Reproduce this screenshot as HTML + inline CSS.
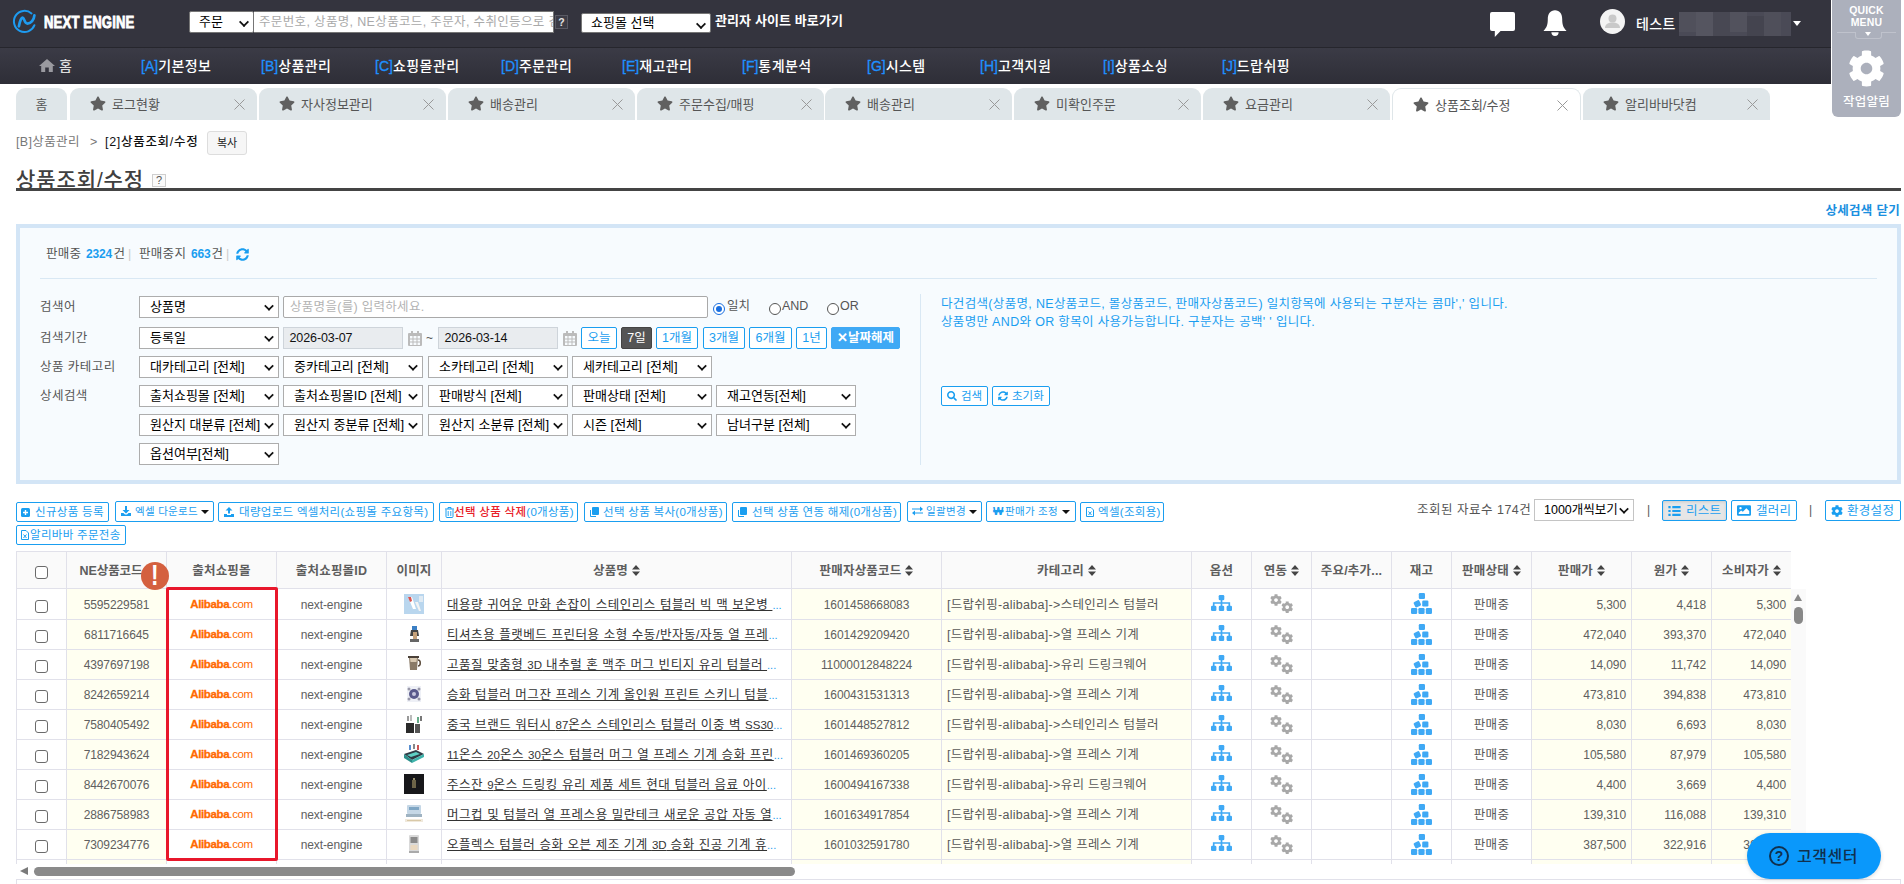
<!DOCTYPE html>
<html lang="ko">
<head>
<meta charset="utf-8">
<title>상품조회/수정</title>
<style>
*{box-sizing:border-box;margin:0;padding:0}
html,body{width:1904px;height:884px;overflow:hidden;background:#fff}
body{font-family:"Liberation Sans","Noto Sans CJK KR","NanumGothic",sans-serif;font-size:12px;color:#333;position:relative}
.abs{position:absolute}
svg{display:block}
/* ---------- top bar ---------- */
#top{position:absolute;left:0;top:0;width:1831px;height:48px;background:#34343e;border-bottom:1px solid #26262d}
#nav{position:absolute;left:0;top:48px;width:1831px;height:36px;background:linear-gradient(#3b3b46,#2e2e37)}
.logo-txt{position:absolute;left:44px;top:11.500px;font-size:17px;line-height:22px;font-weight:bold;color:#fff;transform:scaleX(.77);transform-origin:0 50%;letter-spacing:.2px;white-space:nowrap;-webkit-text-stroke:.9px #fff}
.sel{position:absolute;background:#fff;border:1px solid #767676;border-radius:2px;height:22px;line-height:20px;font-size:13px;color:#000;padding-left:9px;white-space:nowrap;overflow:hidden}
.sel:after{content:"";position:absolute;right:5px;top:5.500px;width:6px;height:6px;border-right:2.200px solid #111;border-bottom:2.200px solid #111;transform:rotate(45deg) scale(.88)}
.inp{position:absolute;background:#fff;border:1px solid #767676;height:22px;line-height:20px;font-size:12.500px;letter-spacing:.35px;color:#a9a9a9;padding-left:5px;white-space:nowrap;overflow:hidden}
.navi{position:absolute;top:0;height:36px;line-height:36px;font-size:14px;color:#fff;font-weight:500;white-space:nowrap;letter-spacing:.45px}
.navi b{font-weight:400;color:#1e90ff;font-size:14px;letter-spacing:0;-webkit-text-stroke:.3px #1e90ff}
/* ---------- tabs ---------- */
.tab{position:absolute;top:88px;height:32px;background:#dfe6e9;border-radius:9px 9px 0 0;color:#555;font-size:13px;line-height:33px;white-space:nowrap}
.tab .st{position:absolute;left:20px;top:8px}
.tab .tx{position:absolute;left:42px;top:0}
.tab .x{position:absolute;right:12px;top:11px}
.tab.on{background:#fff;border:1px solid #dfe6e9;border-bottom:none}
</style>
</head>
<body>
<div id="top">
  <svg class="abs" style="left:12px;top:9px" width="26" height="26" viewBox="0 0 26 26"><path d="M19.500 4.400A10.600 10.600 0 1 0 22.450 16.200" fill="none" stroke="#1e9bf0" stroke-width="2" stroke-linecap="round"/><path d="M6.900 17.300C8 11.500 9.500 8.300 10.800 8.700C12.600 9.300 12.300 14.600 15.500 14.600C19 14.600 22 11 22.400 6.400" fill="none" stroke="#1e9bf0" stroke-width="2.700" stroke-linecap="round" stroke-linejoin="round"/></svg>
  <div class="logo-txt">NEXT ENGINE</div>
  <div class="sel" style="left:189px;top:11px;width:65px;">주문</div>
  <div class="inp" style="left:254px;top:11px;width:300px;border-left:none">주문번호, 상품명, NE상품코드, 주문자, 수취인등으로 검</div>
  <div class="abs" style="left:555px;top:15px;width:13px;height:14px;background:#3c3c46;border:1px solid #5a5a64;color:#e4e4e4;font-size:10.500px;line-height:12px;text-align:center;font-weight:bold">?</div>
  <div class="sel" style="left:581px;top:13px;width:130px;height:20px;line-height:18px">쇼핑몰 선택</div>
  <div class="abs" style="left:715px;top:12px;font-size:13px;letter-spacing:.1px;line-height:18px;font-weight:bold;color:#fff;white-space:nowrap">관리자 사이트 바로가기</div>
  <!-- chat -->
  <svg class="abs" style="left:1490px;top:12px" width="25" height="26" viewBox="0 0 26 26" preserveAspectRatio="none"><path d="M2 0h22a2 2 0 0 1 2 2v15a2 2 0 0 1-2 2H11l-6 6v-6H2a2 2 0 0 1-2-2V2a2 2 0 0 1 2-2z" fill="#fff"/></svg>
  <!-- bell -->
  <svg class="abs" style="left:1543px;top:10px" width="24" height="26" viewBox="0 0 24 26"><path d="M12 .3C7.300 .3 4.800 4 4.800 9c0 6-1.300 8.800-4 11.400-.3.300-.1.700.3.700h21.800c.4 0 .6-.4.300-.7-2.700-2.600-4-5.400-4-11.400 0-5-2.500-8.700-7.200-8.700z" fill="#fff"/><path d="M8.400 22.300h7.200a3.600 3.600 0 0 1-7.200 0z" fill="#fff"/></svg>
  <!-- avatar -->
  <svg class="abs" style="left:1600px;top:9px" width="25" height="25" viewBox="0 0 25 25"><circle cx="12.500" cy="12.500" r="12.500" fill="#f4f4f4"/><circle cx="12.500" cy="9.500" r="4" fill="#c9c9c9"/><path d="M5 19c0-4 3.500-5.500 7.500-5.500S20 15 20 19z" fill="#c9c9c9"/></svg>
  <div class="abs" style="left:1636px;top:13.500px;font-size:14px;line-height:20px;color:#fff;font-weight:500;letter-spacing:.4px">테스트</div>
  <div class="abs" style="left:1679px;top:12px;width:112px;height:24px;background:#4a4a56"><i class="abs" style="left:0;top:0;width:17px;height:20px;background:#50505b"></i><i class="abs" style="left:17px;top:0;width:17px;height:24px;background:#555560"></i><i class="abs" style="left:34px;top:0;width:17px;height:24px;background:#484853"></i><i class="abs" style="left:51px;top:0;width:17px;height:20px;background:#52525d"></i><i class="abs" style="left:68px;top:4px;width:17px;height:20px;background:#44444f"></i><i class="abs" style="left:85px;top:0;width:17px;height:24px;background:#4f4f5a"></i></div>
  <div class="abs" style="left:1793px;top:21px;width:0;height:0;border:4px solid transparent;border-top:5px solid #fff"></div>
</div>
<div id="nav">
  <svg class="abs" style="left:39px;top:11px" width="16" height="13" viewBox="0 0 16 13"><path d="M8 0l8 7h-2.200v6H9.800V8.500H6.200V13H2.200V7H0z" fill="#9a9aa0"/></svg>
  <div class="navi" style="left:59px;color:#ddd">홈</div>
  <div class="navi" style="left:141px"><b>[A]</b>기본정보</div>
  <div class="navi" style="left:261px"><b>[B]</b>상품관리</div>
  <div class="navi" style="left:375px"><b>[C]</b>쇼핑몰관리</div>
  <div class="navi" style="left:501px"><b>[D]</b>주문관리</div>
  <div class="navi" style="left:622px"><b>[E]</b>재고관리</div>
  <div class="navi" style="left:742px"><b>[F]</b>통계분석</div>
  <div class="navi" style="left:867px"><b>[G]</b>시스템</div>
  <div class="navi" style="left:980px"><b>[H]</b>고객지원</div>
  <div class="navi" style="left:1103px"><b>[I]</b>상품소싱</div>
  <div class="navi" style="left:1222px"><b>[J]</b>드랍쉬핑</div>
</div>
<!-- quick menu -->
<div class="abs" id="quick" style="left:1832px;top:0;width:69px;height:117px;background:#acb0bc;border-radius:0 0 6px 6px;color:#fff;text-align:center">
  <div style="font-size:11px;line-height:12px;padding-top:4px;font-weight:bold;letter-spacing:.2px;transform:scaleX(.95)">QUICK<br>MENU</div>
  <div class="abs" style="left:5px;top:32px;width:59px;height:1px;background:#bfc2cc"></div><div class="abs" style="left:23px;top:32px;width:27px;height:7px;border:1px solid #bfc2cc;border-top:none;border-radius:0 0 3px 3px;background:#acb0bc"></div>
  <div class="abs" style="left:33px;top:32px;border:3.500px solid transparent;border-top:4px solid #fff"></div>
  <svg class="abs" style="left:16px;top:50px" width="37" height="37" viewBox="0 0 512 512"><path fill="#fff" d="M487.400 315.700l-42.600-24.600c4.300-23.200 4.300-47 0-70.200l42.600-24.600c4.900-2.800 7.100-8.600 5.500-14-11.100-35.600-30-67.800-54.700-94.600-3.800-4.100-10-5.100-14.800-2.300L380.800 110c-17.900-15.400-38.500-27.300-60.800-35.100V25.800c0-5.600-3.900-10.500-9.400-11.700-36.700-8.200-74.300-7.800-109.200 0-5.500 1.200-9.400 6.100-9.400 11.700V75c-22.200 7.900-42.800 19.800-60.800 35.100L88.700 85.500c-4.900-2.800-11-1.900-14.800 2.300-24.700 26.700-43.600 58.900-54.700 94.600-1.700 5.400.6 11.200 5.500 14L67.300 221c-4.300 23.200-4.300 47 0 70.200l-42.600 24.600c-4.900 2.800-7.100 8.600-5.500 14 11.100 35.600 30 67.800 54.700 94.600 3.800 4.100 10 5.100 14.800 2.300l42.600-24.600c17.900 15.400 38.500 27.300 60.800 35.100v49.200c0 5.600 3.900 10.500 9.400 11.700 36.700 8.200 74.300 7.800 109.200 0 5.500-1.200 9.400-6.100 9.400-11.700v-49.200c22.200-7.900 42.800-19.800 60.800-35.100l42.600 24.600c4.900 2.800 11 1.900 14.800-2.300 24.700-26.700 43.600-58.900 54.700-94.600 1.500-5.500-.7-11.300-5.600-14.100zM256 336c-44.100 0-80-35.900-80-80s35.900-80 80-80 80 35.900 80 80-35.900 80-80 80z"/></svg>
  <div class="abs" style="left:0;top:94px;width:69px;font-size:12.500px;letter-spacing:.3px;line-height:16px;font-weight:500">작업알림</div>
</div>
<div class="tab" style="left:16px;width:51px;text-align:center">홈</div>
<div class="tab" style="left:70px;width:187px"><svg class="st" width="16" height="15" viewBox="0 0 576 512"><path fill="#606060" d="M259.300 17.800L194 150.200 47.900 171.500c-26.200 3.800-36.700 36.100-17.700 54.600l105.700 103-25 145.500c-4.500 26.300 23.200 46 46.400 33.700L288 439.600l130.700 68.700c23.200 12.200 50.900-7.400 46.400-33.700l-25-145.500 105.700-103c19-18.500 8.500-50.800-17.700-54.600L382 150.200 316.700 17.800c-11.700-23.600-45.600-23.900-57.400 0z"/></svg><span class="tx">로그현황</span><svg class="x" width="11" height="11" viewBox="0 0 11 11"><path d="M.5.5l10 10M10.500.5l-10 10" stroke="#999" stroke-width="1" fill="none"/></svg></div>
<div class="tab" style="left:259px;width:187px"><svg class="st" width="16" height="15" viewBox="0 0 576 512"><path fill="#606060" d="M259.300 17.800L194 150.200 47.900 171.500c-26.200 3.800-36.700 36.100-17.700 54.600l105.700 103-25 145.500c-4.500 26.300 23.200 46 46.400 33.700L288 439.600l130.700 68.700c23.200 12.200 50.900-7.400 46.400-33.700l-25-145.500 105.700-103c19-18.500 8.500-50.800-17.700-54.600L382 150.200 316.700 17.800c-11.700-23.600-45.600-23.900-57.400 0z"/></svg><span class="tx">자사정보관리</span><svg class="x" width="11" height="11" viewBox="0 0 11 11"><path d="M.5.5l10 10M10.500.5l-10 10" stroke="#999" stroke-width="1" fill="none"/></svg></div>
<div class="tab" style="left:448px;width:187px"><svg class="st" width="16" height="15" viewBox="0 0 576 512"><path fill="#606060" d="M259.300 17.800L194 150.200 47.900 171.500c-26.200 3.800-36.700 36.100-17.700 54.600l105.700 103-25 145.500c-4.500 26.300 23.200 46 46.400 33.700L288 439.600l130.700 68.700c23.200 12.200 50.900-7.400 46.400-33.700l-25-145.500 105.700-103c19-18.500 8.500-50.800-17.700-54.600L382 150.200 316.700 17.800c-11.700-23.600-45.600-23.900-57.400 0z"/></svg><span class="tx">배송관리</span><svg class="x" width="11" height="11" viewBox="0 0 11 11"><path d="M.5.5l10 10M10.500.5l-10 10" stroke="#999" stroke-width="1" fill="none"/></svg></div>
<div class="tab" style="left:637px;width:187px"><svg class="st" width="16" height="15" viewBox="0 0 576 512"><path fill="#606060" d="M259.300 17.800L194 150.200 47.900 171.500c-26.200 3.800-36.700 36.100-17.700 54.600l105.700 103-25 145.500c-4.500 26.300 23.200 46 46.400 33.700L288 439.600l130.700 68.700c23.200 12.200 50.900-7.400 46.400-33.700l-25-145.500 105.700-103c19-18.500 8.500-50.800-17.700-54.600L382 150.200 316.700 17.800c-11.700-23.600-45.600-23.900-57.400 0z"/></svg><span class="tx">주문수집/매핑</span><svg class="x" width="11" height="11" viewBox="0 0 11 11"><path d="M.5.5l10 10M10.500.5l-10 10" stroke="#999" stroke-width="1" fill="none"/></svg></div>
<div class="tab" style="left:825px;width:187px"><svg class="st" width="16" height="15" viewBox="0 0 576 512"><path fill="#606060" d="M259.300 17.800L194 150.200 47.900 171.500c-26.200 3.800-36.700 36.100-17.700 54.600l105.700 103-25 145.500c-4.500 26.300 23.200 46 46.400 33.700L288 439.600l130.700 68.700c23.200 12.200 50.900-7.400 46.400-33.700l-25-145.500 105.700-103c19-18.500 8.500-50.800-17.700-54.600L382 150.200 316.700 17.800c-11.700-23.600-45.600-23.900-57.400 0z"/></svg><span class="tx">배송관리</span><svg class="x" width="11" height="11" viewBox="0 0 11 11"><path d="M.5.5l10 10M10.500.5l-10 10" stroke="#999" stroke-width="1" fill="none"/></svg></div>
<div class="tab" style="left:1014px;width:187px"><svg class="st" width="16" height="15" viewBox="0 0 576 512"><path fill="#606060" d="M259.300 17.800L194 150.200 47.900 171.500c-26.200 3.800-36.700 36.100-17.700 54.600l105.700 103-25 145.500c-4.500 26.300 23.200 46 46.400 33.700L288 439.600l130.700 68.700c23.200 12.200 50.900-7.400 46.400-33.700l-25-145.500 105.700-103c19-18.500 8.500-50.800-17.700-54.600L382 150.200 316.700 17.800c-11.700-23.600-45.600-23.900-57.400 0z"/></svg><span class="tx">미확인주문</span><svg class="x" width="11" height="11" viewBox="0 0 11 11"><path d="M.5.5l10 10M10.500.5l-10 10" stroke="#999" stroke-width="1" fill="none"/></svg></div>
<div class="tab" style="left:1203px;width:187px"><svg class="st" width="16" height="15" viewBox="0 0 576 512"><path fill="#606060" d="M259.300 17.800L194 150.200 47.900 171.500c-26.200 3.800-36.700 36.100-17.700 54.600l105.700 103-25 145.500c-4.500 26.300 23.200 46 46.400 33.700L288 439.600l130.700 68.700c23.200 12.200 50.900-7.400 46.400-33.700l-25-145.500 105.700-103c19-18.500 8.500-50.800-17.700-54.600L382 150.200 316.700 17.800c-11.700-23.600-45.600-23.900-57.400 0z"/></svg><span class="tx">요금관리</span><svg class="x" width="11" height="11" viewBox="0 0 11 11"><path d="M.5.5l10 10M10.500.5l-10 10" stroke="#999" stroke-width="1" fill="none"/></svg></div>
<div class="tab on" style="left:1392px;width:189px"><svg class="st" width="16" height="15" viewBox="0 0 576 512"><path fill="#606060" d="M259.300 17.800L194 150.200 47.900 171.500c-26.200 3.800-36.700 36.100-17.700 54.600l105.700 103-25 145.500c-4.500 26.300 23.200 46 46.400 33.700L288 439.600l130.700 68.700c23.200 12.200 50.900-7.400 46.400-33.700l-25-145.500 105.700-103c19-18.500 8.500-50.800-17.700-54.600L382 150.200 316.700 17.800c-11.700-23.600-45.600-23.900-57.400 0z"/></svg><span class="tx">상품조회/수정</span><svg class="x" width="11" height="11" viewBox="0 0 11 11"><path d="M.5.5l10 10M10.500.5l-10 10" stroke="#999" stroke-width="1" fill="none"/></svg></div>
<div class="tab" style="left:1583px;width:187px"><svg class="st" width="16" height="15" viewBox="0 0 576 512"><path fill="#606060" d="M259.300 17.800L194 150.200 47.900 171.500c-26.200 3.800-36.700 36.100-17.700 54.600l105.700 103-25 145.500c-4.500 26.300 23.200 46 46.400 33.700L288 439.600l130.700 68.700c23.200 12.200 50.900-7.400 46.400-33.700l-25-145.500 105.700-103c19-18.500 8.500-50.800-17.700-54.600L382 150.200 316.700 17.800c-11.700-23.600-45.600-23.900-57.400 0z"/></svg><span class="tx">알리바바닷컴</span><svg class="x" width="11" height="11" viewBox="0 0 11 11"><path d="M.5.5l10 10M10.500.5l-10 10" stroke="#999" stroke-width="1" fill="none"/></svg></div>
<style>
.bc{position:absolute;top:132.500px;font-size:12.500px;letter-spacing:.35px;line-height:18px;white-space:nowrap}
.cn{top:245px;font-size:12.500px;letter-spacing:.3px;line-height:18px;color:#555;white-space:nowrap}
.lbl{position:absolute;left:40px;font-size:12.500px;letter-spacing:.45px;color:#555;line-height:22px;white-space:nowrap}
.s2{position:absolute;width:140px;height:22px;background:#fff;border:1px solid #adadad;border-radius:0;font-size:13px;line-height:20px;color:#000;padding-left:10px;white-space:nowrap;overflow:hidden}
.s2:after{content:"";position:absolute;right:5px;top:5px;width:6px;height:6px;border-right:2.200px solid #111;border-bottom:2.200px solid #111;transform:rotate(45deg) scale(.85)}
.dt{position:absolute;top:327px;width:120px;height:22px;background:#e9ecef;border:1px solid #ced4da;font-size:12.500px;letter-spacing:-.1px;line-height:21px;color:#111;padding-left:5.500px}
.pb{position:absolute;top:327px;height:22px;border:1px solid #1a9ef0;border-radius:2px;background:#fff;color:#1a9ef0;font-size:12.500px;line-height:20px;text-align:center;white-space:nowrap}
.rd{position:absolute;top:303px;width:12px;height:12px;border:1px solid #555;border-radius:50%;background:#fff}
.rt{position:absolute;top:297px;font-size:12.500px;line-height:18px;color:#555;white-space:nowrap}
.cal{position:absolute;top:331px}
</style>
<div class="bc" style="left:16px;color:#777">[B]상품관리</div>
<div class="bc" style="left:90px;color:#777">&gt;</div>
<div class="bc" style="left:105px;color:#111;font-weight:500;letter-spacing:.7px">[2]상품조회/수정</div>
<div class="abs" style="left:207px;top:131px;width:40px;height:24px;border:1px solid #ddd;border-radius:3px;background:#f6f6f6;font-size:11px;line-height:22px;text-align:center;color:#222">복사</div>
<div class="abs" style="left:16px;top:162px;font-size:21px;letter-spacing:.9px;line-height:36px;color:#404040;font-weight:500;white-space:nowrap">상품조회/수정</div>
<div class="abs" style="left:152px;top:174px;width:14px;height:13px;border:1px solid #cfcfcf;background:#fafafa;font-size:11px;line-height:11px;text-align:center;color:#555;font-weight:normal">?</div>
<div class="abs" style="left:16px;top:188px;width:1885px;height:3px;background:#444"></div>
<div class="abs" style="left:1700px;top:202px;width:1200px;text-align:right;font-size:12.500px;letter-spacing:.3px;line-height:18px;color:#1a8fe0;font-weight:bold;white-space:nowrap;width:200px">상세검색 닫기</div>
<!-- search panel -->
<div class="abs" style="left:16px;top:224px;width:1885px;height:260px;border:4px solid #d3e5f6;background:#f7fbfe"></div>
<div class="abs cn" style="left:46px">판매중</div><div class="abs cn" style="left:86px;color:#1a9ef0;font-weight:bold;letter-spacing:-.2px;font-size:12px">2324</div><div class="abs cn" style="left:113.500px">건</div><div class="abs cn" style="left:128px;color:#ccc">|</div>
<div class="abs cn" style="left:139px">판매중지</div><div class="abs cn" style="left:191px;color:#1a9ef0;font-weight:bold;letter-spacing:-.2px;font-size:12px">663</div><div class="abs cn" style="left:211.500px">건</div><div class="abs cn" style="left:226px;color:#ccc">|</div>
<svg class="abs" style="left:236px;top:248px" width="13" height="13" viewBox="0 0 512 512"><path fill="#1a9ef0" d="M370.700 133.300C339.500 104 298.900 88 255.800 88c-77.500.1-144.300 53.200-162.800 126.900-1.300 5.400-6.100 9.200-11.700 9.200H24.100c-7.500 0-13.200-6.800-11.800-14.200C33.900 94.900 134.800 8 256 8c66.400 0 126.800 26.100 171.300 68.700L463 41c15.100-15.100 41-4.400 41 17v134c0 13.300-10.700 24-24 24H346c-21.400 0-32.100-25.900-17-41l41.700-41.700zM32 296h134c21.400 0 32.100 25.900 17 41l-41.800 41.700c31.300 29.300 71.800 45.300 114.900 45.300 77.400-.1 144.300-53.100 162.800-126.800 1.300-5.400 6.100-9.200 11.700-9.200h57.300c7.500 0 13.200 6.800 11.800 14.200C478.100 417.100 377.200 504 256 504c-66.400 0-126.800-26.100-171.300-68.700L49 471c-15.100 15.100-41 4.400-41-17V320c0-13.300 10.700-24 24-24z"/></svg>
<div class="abs" style="left:40px;top:278px;width:1837px;height:1px;background:#d9e8f4"></div>
<!-- row 1 -->
<div class="lbl" style="top:296px">검색어</div>
<div class="s2" style="left:139px;top:296px">상품명</div>
<div class="abs" style="left:283px;top:296px;width:425px;height:22px;border:1px solid #a9a9a9;border-radius:2px;background:#fff;font-size:12.500px;letter-spacing:.3px;line-height:20px;color:#b3b3b3;padding-left:6px">상품명을(를) 입력하세요.</div>
<div class="rd" style="left:713px;border-color:#1a6fe0"><div style="margin:2px;width:6px;height:6px;border-radius:50%;background:#1a6fe0"></div></div>
<div class="rt" style="left:727px">일치</div>
<div class="rd" style="left:769px"></div><div class="rt" style="left:782px">AND</div>
<div class="rd" style="left:827px"></div><div class="rt" style="left:840px">OR</div>
<!-- row 2 -->
<div class="lbl" style="top:327px">검색기간</div>
<div class="s2" style="left:139px;top:327px">등록일</div>
<div class="dt" style="left:283px">2026-03-07</div>
<svg class="cal" style="left:408px" width="14" height="15" viewBox="0 0 14 15"><path fill="#bbb" d="M1 2h12a1 1 0 0 1 1 1v11a1 1 0 0 1-1 1H1a1 1 0 0 1-1-1V3a1 1 0 0 1 1-1zm1 3v9h10V5zM3 0h2v3H3zm6 0h2v3H9z"/><path d="M5 5v9M9 5v9M2 8h10M2 11h10" stroke="#bbb" stroke-width="1"/></svg>
<div class="abs" style="left:426px;top:329px;font-size:12px;line-height:18px;color:#555">~</div>
<div class="dt" style="left:438px">2026-03-14</div>
<svg class="cal" style="left:563px" width="14" height="15" viewBox="0 0 14 15"><path fill="#bbb" d="M1 2h12a1 1 0 0 1 1 1v11a1 1 0 0 1-1 1H1a1 1 0 0 1-1-1V3a1 1 0 0 1 1-1zm1 3v9h10V5zM3 0h2v3H3zm6 0h2v3H9z"/><path d="M5 5v9M9 5v9M2 8h10M2 11h10" stroke="#bbb" stroke-width="1"/></svg>
<div class="pb" style="left:581px;width:36px">오늘</div>
<div class="pb" style="left:621px;width:31px;background:#555;border-color:#444;color:#fff">7일</div>
<div class="pb" style="left:656px;width:42px">1개월</div>
<div class="pb" style="left:703px;width:42px">3개월</div>
<div class="pb" style="left:749px;width:43px">6개월</div>
<div class="pb" style="left:796px;width:31px">1년</div>
<div class="pb" style="left:831px;width:69px;background:#3fa9f5;border-color:#3fa9f5;color:#fff;font-weight:bold">✕날짜해제</div>
<!-- row 3 -->
<div class="lbl" style="top:356px">상품 카테고리</div>
<div class="s2" style="left:139px;top:356px">대카테고리 [전체]</div>
<div class="s2" style="left:283px;top:356px">중카테고리 [전체]</div>
<div class="s2" style="left:428px;top:356px">소카테고리 [전체]</div>
<div class="s2" style="left:572px;top:356px">세카테고리 [전체]</div>
<!-- row 4 -->
<div class="lbl" style="top:385px">상세검색</div>
<div class="s2" style="left:139px;top:385px">출처쇼핑몰 [전체]</div>
<div class="s2" style="left:283px;top:385px">출처쇼핑몰ID [전체]</div>
<div class="s2" style="left:428px;top:385px">판매방식 [전체]</div>
<div class="s2" style="left:572px;top:385px">판매상태 [전체]</div>
<div class="s2" style="left:716px;top:385px">재고연동[전체]</div>
<!-- row 5 -->
<div class="s2" style="left:139px;top:414px">원산지 대분류 [전체]</div>
<div class="s2" style="left:283px;top:414px">원산지 중분류 [전체]</div>
<div class="s2" style="left:428px;top:414px">원산지 소분류 [전체]</div>
<div class="s2" style="left:572px;top:414px">시즌 [전체]</div>
<div class="s2" style="left:716px;top:414px">남녀구분 [전체]</div>
<!-- row 6 -->
<div class="s2" style="left:139px;top:443px">옵션여부[전체]</div>
<!-- right info -->
<div class="abs" style="left:920px;top:294px;width:1px;height:171px;background:#d9e8f4"></div>
<div class="abs" style="left:941px;top:295px;font-size:12.500px;letter-spacing:.33px;line-height:18px;color:#1a9ef0;white-space:nowrap">다건검색(상품명, NE상품코드, 몰상품코드, 판매자상품코드) 일치항목에 사용되는 구분자는 콤마',' 입니다.<br>상품명만 AND와 OR 항목이 사용가능합니다. 구분자는 공백' ' 입니다.</div>
<div class="abs" style="left:941px;top:386px;width:47px;height:20px;border:1px solid #1a9ef0;border-radius:2px;background:#fff;color:#1a9ef0;font-size:11.500px;line-height:18px;white-space:nowrap"><svg class="abs" style="left:5px;top:4px" width="10" height="10" viewBox="0 0 512 512"><path fill="#1a9ef0" d="M505 442.700L405.300 343c-4.500-4.500-10.600-7-17-7H372c27.600-35.300 44-79.700 44-128C416 93.100 322.900 0 208 0S0 93.100 0 208s93.100 208 208 208c48.300 0 92.700-16.400 128-44v16.300c0 6.400 2.500 12.500 7 17l99.700 99.700c9.400 9.400 24.600 9.400 33.900 0l28.300-28.300c9.400-9.400 9.400-24.600.1-34zM208 336c-70.700 0-128-57.200-128-128 0-70.700 57.200-128 128-128 70.700 0 128 57.200 128 128 0 70.700-57.200 128-128 128z"/></svg><span class="abs" style="left:19px;top:0">검색</span></div>
<div class="abs" style="left:992px;top:386px;width:58px;height:20px;border:1px solid #1a9ef0;border-radius:2px;background:#fff;color:#1a9ef0;font-size:11.500px;line-height:18px;white-space:nowrap"><svg class="abs" style="left:5px;top:4px" width="10" height="10" viewBox="0 0 512 512"><path fill="#1a9ef0" d="M370.700 133.300C339.500 104 298.900 88 255.800 88c-77.500.1-144.300 53.200-162.800 126.900-1.300 5.400-6.100 9.200-11.700 9.200H24.100c-7.500 0-13.200-6.800-11.800-14.200C33.900 94.900 134.800 8 256 8c66.400 0 126.800 26.100 171.300 68.700L463 41c15.100-15.100 41-4.400 41 17v134c0 13.300-10.700 24-24 24H346c-21.400 0-32.100-25.900-17-41l41.700-41.700zM32 296h134c21.400 0 32.100 25.900 17 41l-41.800 41.700c31.300 29.300 71.800 45.300 114.900 45.300 77.400-.1 144.300-53.100 162.800-126.800 1.300-5.400 6.100-9.200 11.700-9.200h57.300c7.500 0 13.200 6.800 11.800 14.200C478.100 417.100 377.200 504 256 504c-66.400 0-126.800-26.100-171.300-68.700L49 471c-15.100 15.100-41 4.400-41-17V320c0-13.300 10.700-24 24-24z"/></svg><span class="abs" style="left:19px;top:0">초기화</span></div>
<style>
.tb{position:absolute;top:502px;height:20px;border:1px solid #1a9ef0;border-radius:2px;background:#fff;color:#1a9ef0;font-size:11.500px;letter-spacing:.3px;line-height:18px;white-space:nowrap;overflow:hidden}
.tb span{position:absolute;top:0}
.tb svg{position:absolute}
.car{position:absolute;top:8px;width:0;height:0;border:4px solid transparent;border-top:4.500px solid #111}
</style>
<!-- toolbar row 1 -->
<div class="tb" style="left:16px;width:93px"><svg style="left:4px;top:5px" width="9" height="9" viewBox="0 0 9 9"><rect width="9" height="9" rx="1.500" fill="#1a9ef0"/><path d="M4.500 2v5M2 4.500h5" stroke="#fff" stroke-width="1.400"/></svg><span style="left:18px">신규상품 등록</span></div>
<div class="tb" style="left:115px;top:501px;height:21px;width:99px"><svg style="left:5px;top:4px" width="10" height="10" viewBox="0 0 10 10"><path d="M4 0h2v4h2.500L5 7.500 1.500 4H4zM0 7h2.500l1.500 1.500h2L7.500 7H10v3H0z" fill="#1a9ef0"/></svg><span style="left:19px;font-size:10.500px">엑셀 다운로드</span><i class="car" style="left:85px"></i></div>
<div class="tb" style="left:218px;width:216px"><svg style="left:5px;top:4px" width="10" height="10" viewBox="0 0 10 10"><path d="M4 6.500h2v-3h2.500L5 0 1.500 3.500H4zM0 7h3v1h4V7h3v3H0z" fill="#1a9ef0"/></svg><span style="left:20px">대량업로드 엑셀처리(쇼핑몰 주요항목)</span></div>
<div class="tb" style="left:439px;width:139px"><svg style="left:4.500px;top:3.500px" width="9" height="11" viewBox="0 0 9 11"><path d="M0 2h9M3 2V.500h3V2M1 2.500V9.500a1 1 0 0 0 1 1h5a1 1 0 0 0 1-1V2.500" fill="none" stroke="#1a9ef0" stroke-width="1"/><path d="M3.200 4v5M5.800 4v5" stroke="#1a9ef0" stroke-width=".9"/></svg><span style="left:14px;font-size:11.500px"><b style="color:#e8212a;font-weight:500">선택 상품 삭제</b>(0개상품)</span></div>
<div class="tb" style="left:584px;width:143px"><svg style="left:5px;top:4px" width="10" height="10" viewBox="0 0 10 10"><path d="M3 0h5a1 1 0 0 1 1 1v6a1 1 0 0 1-1 1H3a1 1 0 0 1-1-1V1a1 1 0 0 1 1-1zM0 3h1v6h5v1H1a1 1 0 0 1-1-1z" fill="#1a9ef0"/></svg><span style="left:18px;font-size:11.500px">선택 상품 복사(0개상품)</span></div>
<div class="tb" style="left:732px;width:169px"><svg style="left:5px;top:4px" width="10" height="10" viewBox="0 0 10 10"><path d="M3 0h5a1 1 0 0 1 1 1v6a1 1 0 0 1-1 1H3a1 1 0 0 1-1-1V1a1 1 0 0 1 1-1zM0 3h1v6h5v1H1a1 1 0 0 1-1-1z" fill="#1a9ef0"/></svg><span style="left:19px;font-size:11.500px">선택 상품 연동 해제(0개상품)</span></div>
<div class="tb" style="left:907px;top:501px;height:21px;width:75px"><svg style="left:4px;top:4px" width="11" height="10" viewBox="0 0 11 10"><path d="M0 2.500h8V.500L11 3 8 5.500v-2H0zM11 7.500H3v2L0 7l3-2.500v2h8z" fill="#1a9ef0"/></svg><span style="left:18px;font-size:10.500px">일괄변경</span><i class="car" style="left:61px"></i></div>
<div class="tb" style="left:986px;top:501px;height:21px;width:90px"><span style="left:6px;font-weight:bold;font-size:11px">₩</span><span style="left:18px;font-size:10.500px">판매가 조정</span><i class="car" style="left:75px"></i></div>
<div class="tb" style="left:1080px;width:84px"><svg style="left:5px;top:4px" width="8" height="10" viewBox="0 0 8 10"><path d="M.500.500h4.500l2.500 2.500v6.500h-7z" fill="none" stroke="#1a9ef0"/><path d="M2.500 4.500l3 3.500M5.500 4.500l-3 3.500" stroke="#1a9ef0" stroke-width="1"/></svg><span style="left:17px">엑셀(조회용)</span></div>
<!-- toolbar row 2 -->
<div class="tb" style="left:16px;top:525px;width:110px"><svg style="left:4px;top:4px" width="8" height="10" viewBox="0 0 8 10"><path d="M.500.500h4.500l2.500 2.500v6.500h-7z" fill="none" stroke="#1a9ef0"/><path d="M2.500 4.500l3 3.500M5.500 4.500l-3 3.500" stroke="#1a9ef0" stroke-width="1"/></svg><span style="left:13px">알리바바 주문전송</span></div>
<!-- right side -->
<div class="abs" style="left:1417px;top:501px;font-size:12.500px;letter-spacing:.5px;line-height:18px;color:#555;white-space:nowrap">조회된 자료수 174건</div>
<div class="s2" style="left:1534px;top:499px;width:100px;padding-left:9px;font-size:12.500px;border-color:#c4c4c4">1000개씩보기</div>
<div class="abs" style="left:1647px;top:501px;font-size:12px;line-height:18px;color:#555">|</div>
<div class="tb" style="left:1662px;top:500px;width:65px;height:21px;background:#e6e6e6;box-shadow:inset 0 1px 3px rgba(0,0,0,.12);line-height:20px"><svg style="left:5px;top:5px" width="13" height="10" viewBox="0 0 11 9"><path d="M0 0h2v2H0zM3.500 0H11v2H3.500zM0 3.500h2v2H0zM3.500 3.500H11v2H3.500zM0 7h2v2H0zM3.500 7H11v2H3.500z" fill="#1a9ef0"/></svg><span style="left:23px;top:0;font-size:12.500px">리스트</span></div>
<div class="tb" style="left:1731px;top:500px;width:66px;height:21px;line-height:20px"><svg style="left:5px;top:4px" width="14" height="11" viewBox="0 0 12 9"><path d="M1 0h10a1 1 0 0 1 1 1v7a1 1 0 0 1-1 1H1a1 1 0 0 1-1-1V1a1 1 0 0 1 1-1zm.500 7.500h9V5L8 2.500 5 5.500 3.500 4.500 1.500 6.500zM3 1.500a1 1 0 1 0 .01 0z" fill="#1a9ef0"/></svg><span style="left:24px;top:0;font-size:12.500px">갤러리</span></div>
<div class="abs" style="left:1809px;top:501px;font-size:12px;line-height:18px;color:#555">|</div>
<div class="tb" style="left:1825px;top:500px;width:76px;height:21px;line-height:20px"><svg style="left:5px;top:4px" width="12" height="12" viewBox="0 0 512 512"><path fill="#1a9ef0" d="M487.400 315.700l-42.600-24.600c4.300-23.200 4.300-47 0-70.200l42.600-24.600c4.900-2.800 7.100-8.600 5.500-14-11.100-35.600-30-67.800-54.700-94.600-3.800-4.100-10-5.100-14.800-2.300L380.800 110c-17.900-15.400-38.500-27.300-60.800-35.100V25.800c0-5.600-3.900-10.500-9.400-11.700-36.700-8.200-74.300-7.800-109.200 0-5.500 1.200-9.400 6.100-9.400 11.700V75c-22.200 7.900-42.800 19.800-60.800 35.100L88.700 85.500c-4.900-2.800-11-1.900-14.800 2.300-24.700 26.700-43.600 58.900-54.700 94.600-1.700 5.400.6 11.200 5.500 14L67.300 221c-4.300 23.200-4.300 47 0 70.200l-42.600 24.600c-4.900 2.800-7.100 8.600-5.500 14 11.100 35.600 30 67.800 54.700 94.600 3.800 4.100 10 5.100 14.800 2.300l42.600-24.600c17.900 15.400 38.500 27.300 60.800 35.100v49.200c0 5.600 3.900 10.500 9.400 11.700 36.700 8.200 74.300 7.800 109.200 0 5.500-1.200 9.400-6.100 9.400-11.700v-49.200c22.200-7.900 42.800-19.800 60.800-35.100l42.600 24.600c4.900 2.800 11 1.900 14.800-2.300 24.700-26.700 43.600-58.900 54.700-94.600 1.500-5.500-.7-11.300-5.600-14.100zM256 336c-44.100 0-80-35.900-80-80s35.900-80 80-80 80 35.900 80 80-35.900 80-80 80z"/></svg><span style="left:21px;top:0;font-size:12.500px">환경설정</span></div>
<style>
.th{position:absolute;top:552px;height:36px;background:#fafafa;font-size:12.500px;letter-spacing:.2px;font-weight:bold;color:#5e5e5e;line-height:36px;padding-top:1px;text-align:center;white-space:nowrap;overflow:hidden}
.th .so{display:inline-block;vertical-align:-1px;margin-left:4px}
.td{position:absolute;height:30px;padding-top:1px;line-height:30px;font-size:12.500px;letter-spacing:.3px;color:#585858;white-space:nowrap;overflow:hidden;text-align:center}
.td.y{background:#fffff1}
.td.n{font-size:12px;letter-spacing:-.1px;color:#606060}
.td.r{text-align:right;padding-right:5px}
.td.l{text-align:left;padding-left:5px}
.td svg{position:absolute}
.vl{position:absolute;top:551px;width:1px;height:313px;background:#e1e1ea}
.hl{position:absolute;left:16px;width:1775px;height:1px;background:#e1e1ea}
.cb{position:absolute;left:35px;width:13px;height:13px;border:1.500px solid #6b6b6b;border-radius:3px;background:#fff}
.ali{font-size:11.500px;letter-spacing:-.35px;color:#ff6a00;position:relative;top:-1px}
.ali b{font-weight:bold;-webkit-text-stroke:.3px #ff6a00}
.pn i{font-style:normal;font-size:11.500px;letter-spacing:0}
.pn{color:#333;text-decoration:underline;letter-spacing:.55px}
</style>
<div class="th" style="left:17px;width:49px"></div>
<div class="th" style="left:67px;width:99px;padding-right:11px;letter-spacing:-.1px">NE상품코드</div>
<div class="th" style="left:167px;width:109px">출처쇼핑몰</div>
<div class="th" style="left:277px;width:109px">출처쇼핑몰ID</div>
<div class="th" style="left:387px;width:54px">이미지</div>
<div class="th" style="left:442px;width:349px">상품명<svg class="so" width="8" height="11" viewBox="0 0 8 11"><path d="M4 0l4 4.500H0zM4 11L0 6.500h8z" fill="#444"/></svg></div>
<div class="th" style="left:792px;width:149px">판매자상품코드<svg class="so" width="8" height="11" viewBox="0 0 8 11"><path d="M4 0l4 4.500H0zM4 11L0 6.500h8z" fill="#444"/></svg></div>
<div class="th" style="left:942px;width:249px">카테고리<svg class="so" width="8" height="11" viewBox="0 0 8 11"><path d="M4 0l4 4.500H0zM4 11L0 6.500h8z" fill="#444"/></svg></div>
<div class="th" style="left:1192px;width:59px">옵션</div>
<div class="th" style="left:1252px;width:59px">연동<svg class="so" width="8" height="11" viewBox="0 0 8 11"><path d="M4 0l4 4.500H0zM4 11L0 6.500h8z" fill="#444"/></svg></div>
<div class="th" style="left:1312px;width:79px">주요/추가...</div>
<div class="th" style="left:1392px;width:59px">재고</div>
<div class="th" style="left:1452px;width:79px">판매상태<svg class="so" width="8" height="11" viewBox="0 0 8 11"><path d="M4 0l4 4.500H0zM4 11L0 6.500h8z" fill="#444"/></svg></div>
<div class="th" style="left:1532px;width:99px">판매가<svg class="so" width="8" height="11" viewBox="0 0 8 11"><path d="M4 0l4 4.500H0zM4 11L0 6.500h8z" fill="#444"/></svg></div>
<div class="th" style="left:1632px;width:79px">원가<svg class="so" width="8" height="11" viewBox="0 0 8 11"><path d="M4 0l4 4.500H0zM4 11L0 6.500h8z" fill="#444"/></svg></div>
<div class="th" style="left:1712px;width:79px">소비자가<svg class="so" width="8" height="11" viewBox="0 0 8 11"><path d="M4 0l4 4.500H0zM4 11L0 6.500h8z" fill="#444"/></svg></div>
<div class="cb" style="top:566px"></div>
<div class="cb" style="top:600px"></div>
<div class="td y n" style="left:67px;top:589px;width:99px;height:30px;line-height:30px;">5595229581</div>
<div class="td " style="left:167px;top:589px;width:109px;height:30px;line-height:30px;"><span class="ali"><b>Alibaba</b>.com</span></div>
<div class="td n" style="left:277px;top:589px;width:109px;height:30px;line-height:30px;">next-engine</div>
<div class="td " style="left:387px;top:589px;width:54px;height:30px;line-height:30px;"><svg style="left:17px;top:5px" width="20" height="20" viewBox="0 0 20 20"><rect width="20" height="20" fill="#b9d6ee"/><path d="M4 3l5 12h3L8 3z" fill="#fff"/><path d="M11 8l4 9h2l-3-9z" fill="#f3f3f3"/><path d="M4 3l2 5 2-1-1-4z" fill="#d9534f"/><rect x="15" y="2" width="4" height="6" fill="#dfeaf3"/></svg></div>
<div class="td l" style="left:442px;top:589px;width:349px;height:30px;line-height:30px;"><span class="pn">대용량 귀여운 만화 손잡이 스테인리스 텀블러 빅 맥 보온병 </span><span style="color:#1a9ef0;letter-spacing:0;font-size:11px">...</span></div>
<div class="td y n" style="left:792px;top:589px;width:149px;height:30px;line-height:30px;">1601458668083</div>
<div class="td y l" style="left:942px;top:589px;width:249px;height:30px;line-height:30px;">[드랍쉬핑-alibaba]-&gt;스테인리스 텀블러</div>
<div class="td " style="left:1192px;top:589px;width:59px;height:30px;line-height:30px;"><svg style="left:19px;top:6px" width="21" height="16" viewBox="0 0 21 16"><g fill="#3fa9f5"><rect x="7.700" y="0" width="5.600" height="5.200" rx="1.300"/><rect x="0" y="10.800" width="5.400" height="5.200" rx="1.300"/><rect x="7.800" y="10.800" width="5.400" height="5.200" rx="1.300"/><rect x="15.600" y="10.800" width="5.400" height="5.200" rx="1.300"/></g><path d="M10.500 5v6M2.700 11V8h15.600v3" fill="none" stroke="#3fa9f5" stroke-width="1.700"/></svg></div>
<div class="td " style="left:1252px;top:589px;width:59px;height:30px;line-height:30px;"><svg style="left:18px;top:5px" width="23" height="19" viewBox="0 0 23 19"><g fill="#a8a8a8"><path transform="translate(0,0) scale(.0235)" d="M487.400 315.700l-42.600-24.600c4.300-23.200 4.300-47 0-70.200l42.600-24.600c4.900-2.800 7.100-8.600 5.500-14-11.100-35.600-30-67.800-54.700-94.600-3.800-4.100-10-5.100-14.800-2.300L380.800 110c-17.900-15.400-38.500-27.300-60.800-35.100V25.800c0-5.600-3.900-10.500-9.400-11.700-36.700-8.200-74.300-7.800-109.200 0-5.500 1.200-9.400 6.100-9.400 11.700V75c-22.200 7.900-42.800 19.800-60.800 35.100L88.700 85.500c-4.900-2.800-11-1.900-14.800 2.300-24.700 26.700-43.600 58.900-54.700 94.600-1.700 5.400.6 11.200 5.500 14L67.300 221c-4.300 23.200-4.300 47 0 70.200l-42.600 24.600c-4.900 2.800-7.100 8.600-5.500 14 11.100 35.600 30 67.800 54.700 94.600 3.800 4.100 10 5.100 14.800 2.300l42.600-24.600c17.900 15.400 38.500 27.300 60.800 35.100v49.200c0 5.600 3.900 10.500 9.400 11.700 36.700 8.200 74.300 7.800 109.200 0 5.500-1.200 9.400-6.100 9.400-11.700v-49.200c22.200-7.900 42.800-19.800 60.800-35.100l42.600 24.600c4.900 2.800 11 1.900 14.800-2.300 24.700-26.700 43.600-58.900 54.700-94.600 1.500-5.500-.7-11.300-5.600-14.100zM256 336c-44.100 0-80-35.900-80-80s35.900-80 80-80 80 35.900 80 80-35.900 80-80 80z"/><path transform="translate(11.200,7.200) scale(.0235)" d="M487.400 315.700l-42.600-24.600c4.300-23.200 4.300-47 0-70.200l42.600-24.600c4.900-2.800 7.100-8.600 5.500-14-11.100-35.600-30-67.800-54.700-94.600-3.800-4.100-10-5.100-14.800-2.300L380.800 110c-17.900-15.400-38.500-27.300-60.800-35.100V25.800c0-5.600-3.900-10.500-9.400-11.700-36.700-8.200-74.300-7.800-109.200 0-5.500 1.200-9.400 6.100-9.400 11.700V75c-22.200 7.900-42.800 19.800-60.800 35.100L88.700 85.500c-4.900-2.800-11-1.900-14.800 2.300-24.700 26.700-43.600 58.900-54.700 94.600-1.700 5.400.6 11.200 5.500 14L67.300 221c-4.300 23.200-4.300 47 0 70.200l-42.600 24.600c-4.900 2.800-7.100 8.600-5.500 14 11.100 35.600 30 67.800 54.700 94.600 3.800 4.100 10 5.100 14.800 2.300l42.600-24.600c17.900 15.400 38.500 27.300 60.800 35.100v49.200c0 5.600 3.900 10.500 9.400 11.700 36.700 8.200 74.300 7.800 109.200 0 5.500-1.200 9.400-6.100 9.400-11.700v-49.200c22.200-7.900 42.800-19.800 60.800-35.100l42.600 24.600c4.900 2.800 11 1.900 14.800-2.300 24.700-26.700 43.600-58.900 54.700-94.600 1.500-5.500-.7-11.300-5.600-14.100zM256 336c-44.100 0-80-35.900-80-80s35.900-80 80-80 80 35.900 80 80-35.900 80-80 80z"/></g></svg></div>
<div class="td " style="left:1312px;top:589px;width:79px;height:30px;line-height:30px;"></div>
<div class="td " style="left:1392px;top:589px;width:59px;height:30px;line-height:30px;"><svg style="left:19px;top:4px" width="21" height="21" viewBox="0 0 21 21"><g fill="#3fa9f5"><rect x="7.800" y="0" width="6.200" height="6" rx="1.200"/><rect x="3.200" y="7.800" width="6.200" height="6" rx="1.200" transform="rotate(-25 6.300 10.800)"/><rect x="11.200" y="7.500" width="6.200" height="6" rx="1.200"/><rect x="0" y="15" width="6.200" height="6" rx="1.200"/><rect x="7.400" y="15" width="6.200" height="6" rx="1.200"/><rect x="14.800" y="15" width="6.200" height="6" rx="1.200"/></g></svg></div>
<div class="td " style="left:1452px;top:589px;width:79px;height:30px;line-height:30px;">판매중</div>
<div class="td y r n" style="left:1532px;top:589px;width:99px;height:30px;line-height:30px;">5,300</div>
<div class="td y r n" style="left:1632px;top:589px;width:79px;height:30px;line-height:30px;">4,418</div>
<div class="td y r n" style="left:1712px;top:589px;width:79px;height:30px;line-height:30px;">5,300</div>
<div class="cb" style="top:630px"></div>
<div class="td y n" style="left:67px;top:620px;width:99px;height:29px;line-height:29px;">6811716645</div>
<div class="td " style="left:167px;top:620px;width:109px;height:29px;line-height:29px;"><span class="ali"><b>Alibaba</b>.com</span></div>
<div class="td n" style="left:277px;top:620px;width:109px;height:29px;line-height:29px;">next-engine</div>
<div class="td " style="left:387px;top:620px;width:54px;height:29px;line-height:29px;"><svg style="left:17px;top:4px" width="20" height="20" viewBox="0 0 20 20"><path d="M8 2h5v4H8z" fill="#3b7fc4"/><path d="M7 6h7l1 6H6z" fill="#444"/><path d="M9 8h4v7H9z" fill="#c7a27a"/><path d="M6 15h9v3H6z" fill="#666"/></svg></div>
<div class="td l" style="left:442px;top:620px;width:349px;height:29px;line-height:29px;"><span class="pn">티셔츠용 플랫베드 프린터용 소형 수동/반자동/자동 열 프레</span><span style="color:#1a9ef0;letter-spacing:0;font-size:11px">...</span></div>
<div class="td y n" style="left:792px;top:620px;width:149px;height:29px;line-height:29px;">1601429209420</div>
<div class="td y l" style="left:942px;top:620px;width:249px;height:29px;line-height:29px;">[드랍쉬핑-alibaba]-&gt;열 프레스 기계</div>
<div class="td " style="left:1192px;top:620px;width:59px;height:29px;line-height:29px;"><svg style="left:19px;top:5px" width="21" height="16" viewBox="0 0 21 16"><g fill="#3fa9f5"><rect x="7.700" y="0" width="5.600" height="5.200" rx="1.300"/><rect x="0" y="10.800" width="5.400" height="5.200" rx="1.300"/><rect x="7.800" y="10.800" width="5.400" height="5.200" rx="1.300"/><rect x="15.600" y="10.800" width="5.400" height="5.200" rx="1.300"/></g><path d="M10.500 5v6M2.700 11V8h15.600v3" fill="none" stroke="#3fa9f5" stroke-width="1.700"/></svg></div>
<div class="td " style="left:1252px;top:620px;width:59px;height:29px;line-height:29px;"><svg style="left:18px;top:5px" width="23" height="19" viewBox="0 0 23 19"><g fill="#a8a8a8"><path transform="translate(0,0) scale(.0235)" d="M487.400 315.700l-42.600-24.600c4.300-23.200 4.300-47 0-70.200l42.600-24.600c4.900-2.800 7.100-8.600 5.500-14-11.100-35.600-30-67.800-54.700-94.600-3.800-4.100-10-5.100-14.800-2.300L380.800 110c-17.900-15.400-38.500-27.300-60.800-35.100V25.800c0-5.600-3.900-10.500-9.400-11.700-36.700-8.200-74.300-7.800-109.200 0-5.500 1.200-9.400 6.100-9.400 11.700V75c-22.200 7.900-42.800 19.800-60.800 35.100L88.700 85.500c-4.900-2.800-11-1.900-14.800 2.300-24.700 26.700-43.600 58.900-54.700 94.600-1.700 5.400.6 11.200 5.500 14L67.300 221c-4.300 23.200-4.300 47 0 70.200l-42.600 24.600c-4.900 2.800-7.100 8.600-5.500 14 11.100 35.600 30 67.800 54.700 94.600 3.800 4.100 10 5.100 14.800 2.300l42.600-24.600c17.900 15.400 38.500 27.300 60.800 35.100v49.200c0 5.600 3.900 10.500 9.400 11.700 36.700 8.200 74.300 7.800 109.200 0 5.500-1.200 9.400-6.100 9.400-11.700v-49.200c22.200-7.900 42.800-19.800 60.800-35.100l42.600 24.600c4.900 2.800 11 1.900 14.800-2.300 24.700-26.700 43.600-58.900 54.700-94.600 1.500-5.500-.7-11.300-5.600-14.100zM256 336c-44.100 0-80-35.900-80-80s35.900-80 80-80 80 35.900 80 80-35.900 80-80 80z"/><path transform="translate(11.200,7.200) scale(.0235)" d="M487.400 315.700l-42.600-24.600c4.300-23.200 4.300-47 0-70.200l42.600-24.600c4.900-2.800 7.100-8.600 5.500-14-11.100-35.600-30-67.800-54.700-94.600-3.800-4.100-10-5.100-14.800-2.300L380.800 110c-17.900-15.400-38.500-27.300-60.800-35.100V25.800c0-5.600-3.900-10.500-9.400-11.700-36.700-8.200-74.300-7.800-109.200 0-5.500 1.200-9.400 6.100-9.400 11.700V75c-22.200 7.900-42.800 19.800-60.800 35.100L88.700 85.500c-4.900-2.800-11-1.900-14.800 2.300-24.700 26.700-43.600 58.900-54.700 94.600-1.700 5.400.6 11.200 5.500 14L67.300 221c-4.300 23.200-4.300 47 0 70.200l-42.600 24.600c-4.900 2.800-7.100 8.600-5.500 14 11.100 35.600 30 67.800 54.700 94.600 3.800 4.100 10 5.100 14.800 2.300l42.600-24.600c17.900 15.400 38.500 27.300 60.800 35.100v49.200c0 5.600 3.900 10.500 9.400 11.700 36.700 8.200 74.300 7.800 109.200 0 5.500-1.200 9.400-6.100 9.400-11.700v-49.200c22.200-7.900 42.800-19.800 60.800-35.100l42.600 24.600c4.900 2.800 11 1.900 14.800-2.300 24.700-26.700 43.600-58.900 54.700-94.600 1.500-5.500-.7-11.300-5.600-14.100zM256 336c-44.100 0-80-35.900-80-80s35.900-80 80-80 80 35.900 80 80-35.900 80-80 80z"/></g></svg></div>
<div class="td " style="left:1312px;top:620px;width:79px;height:29px;line-height:29px;"></div>
<div class="td " style="left:1392px;top:620px;width:59px;height:29px;line-height:29px;"><svg style="left:19px;top:4px" width="21" height="21" viewBox="0 0 21 21"><g fill="#3fa9f5"><rect x="7.800" y="0" width="6.200" height="6" rx="1.200"/><rect x="3.200" y="7.800" width="6.200" height="6" rx="1.200" transform="rotate(-25 6.300 10.800)"/><rect x="11.200" y="7.500" width="6.200" height="6" rx="1.200"/><rect x="0" y="15" width="6.200" height="6" rx="1.200"/><rect x="7.400" y="15" width="6.200" height="6" rx="1.200"/><rect x="14.800" y="15" width="6.200" height="6" rx="1.200"/></g></svg></div>
<div class="td " style="left:1452px;top:620px;width:79px;height:29px;line-height:29px;">판매중</div>
<div class="td y r n" style="left:1532px;top:620px;width:99px;height:29px;line-height:29px;">472,040</div>
<div class="td y r n" style="left:1632px;top:620px;width:79px;height:29px;line-height:29px;">393,370</div>
<div class="td y r n" style="left:1712px;top:620px;width:79px;height:29px;line-height:29px;">472,040</div>
<div class="cb" style="top:660px"></div>
<div class="td y n" style="left:67px;top:650px;width:99px;height:29px;line-height:29px;">4397697198</div>
<div class="td " style="left:167px;top:650px;width:109px;height:29px;line-height:29px;"><span class="ali"><b>Alibaba</b>.com</span></div>
<div class="td n" style="left:277px;top:650px;width:109px;height:29px;line-height:29px;">next-engine</div>
<div class="td " style="left:387px;top:650px;width:54px;height:29px;line-height:29px;"><svg style="left:17px;top:4px" width="20" height="20" viewBox="0 0 20 20"><path d="M5 3h9l-1 13H6z" fill="#8a7a66"/><path d="M6 4h7l-.500 4H6.500z" fill="#d8c8b0"/><path d="M14 6c3 0 3 6 0 6" fill="none" stroke="#5a4a3a" stroke-width="1.500"/><path d="M4 2h11v2H4z" fill="#4a4038"/></svg></div>
<div class="td l" style="left:442px;top:650px;width:349px;height:29px;line-height:29px;"><span class="pn">고품질 맞춤형 <i>3D</i> 내추럴 혼 맥주 머그 빈티지 유리 텀블러 </span><span style="color:#1a9ef0;letter-spacing:0;font-size:11px">...</span></div>
<div class="td y n" style="left:792px;top:650px;width:149px;height:29px;line-height:29px;">11000012848224</div>
<div class="td y l" style="left:942px;top:650px;width:249px;height:29px;line-height:29px;">[드랍쉬핑-alibaba]-&gt;유리 드링크웨어</div>
<div class="td " style="left:1192px;top:650px;width:59px;height:29px;line-height:29px;"><svg style="left:19px;top:5px" width="21" height="16" viewBox="0 0 21 16"><g fill="#3fa9f5"><rect x="7.700" y="0" width="5.600" height="5.200" rx="1.300"/><rect x="0" y="10.800" width="5.400" height="5.200" rx="1.300"/><rect x="7.800" y="10.800" width="5.400" height="5.200" rx="1.300"/><rect x="15.600" y="10.800" width="5.400" height="5.200" rx="1.300"/></g><path d="M10.500 5v6M2.700 11V8h15.600v3" fill="none" stroke="#3fa9f5" stroke-width="1.700"/></svg></div>
<div class="td " style="left:1252px;top:650px;width:59px;height:29px;line-height:29px;"><svg style="left:18px;top:5px" width="23" height="19" viewBox="0 0 23 19"><g fill="#a8a8a8"><path transform="translate(0,0) scale(.0235)" d="M487.400 315.700l-42.600-24.600c4.300-23.200 4.300-47 0-70.200l42.600-24.600c4.900-2.800 7.100-8.600 5.500-14-11.100-35.600-30-67.800-54.700-94.600-3.800-4.100-10-5.100-14.800-2.300L380.800 110c-17.900-15.400-38.500-27.300-60.800-35.100V25.800c0-5.600-3.900-10.500-9.400-11.700-36.700-8.200-74.300-7.800-109.200 0-5.500 1.200-9.400 6.100-9.400 11.700V75c-22.200 7.900-42.800 19.800-60.800 35.100L88.700 85.500c-4.900-2.800-11-1.900-14.800 2.300-24.700 26.700-43.600 58.900-54.700 94.600-1.700 5.400.6 11.200 5.500 14L67.300 221c-4.300 23.200-4.300 47 0 70.200l-42.600 24.600c-4.900 2.800-7.100 8.600-5.500 14 11.100 35.600 30 67.800 54.700 94.600 3.800 4.100 10 5.100 14.800 2.300l42.600-24.600c17.900 15.400 38.500 27.300 60.800 35.100v49.200c0 5.600 3.900 10.500 9.400 11.700 36.700 8.200 74.300 7.800 109.200 0 5.500-1.200 9.400-6.100 9.400-11.700v-49.200c22.200-7.900 42.800-19.800 60.800-35.100l42.600 24.600c4.900 2.800 11 1.900 14.800-2.300 24.700-26.700 43.600-58.900 54.700-94.600 1.500-5.500-.7-11.300-5.600-14.100zM256 336c-44.100 0-80-35.900-80-80s35.900-80 80-80 80 35.900 80 80-35.900 80-80 80z"/><path transform="translate(11.200,7.200) scale(.0235)" d="M487.400 315.700l-42.600-24.600c4.300-23.200 4.300-47 0-70.200l42.600-24.600c4.900-2.800 7.100-8.600 5.500-14-11.100-35.600-30-67.800-54.700-94.600-3.800-4.100-10-5.100-14.800-2.300L380.800 110c-17.900-15.400-38.500-27.300-60.800-35.100V25.800c0-5.600-3.900-10.500-9.400-11.700-36.700-8.200-74.300-7.800-109.200 0-5.500 1.200-9.400 6.100-9.400 11.700V75c-22.200 7.900-42.800 19.800-60.800 35.100L88.700 85.500c-4.900-2.800-11-1.900-14.800 2.300-24.700 26.700-43.600 58.900-54.700 94.600-1.700 5.400.6 11.200 5.500 14L67.300 221c-4.300 23.200-4.300 47 0 70.200l-42.600 24.600c-4.900 2.800-7.100 8.600-5.500 14 11.100 35.600 30 67.800 54.700 94.600 3.800 4.100 10 5.100 14.800 2.300l42.600-24.600c17.900 15.400 38.500 27.300 60.800 35.100v49.200c0 5.600 3.900 10.500 9.400 11.700 36.700 8.200 74.300 7.800 109.200 0 5.500-1.200 9.400-6.100 9.400-11.700v-49.200c22.200-7.900 42.800-19.800 60.800-35.100l42.600 24.600c4.900 2.800 11 1.900 14.800-2.300 24.700-26.700 43.600-58.900 54.700-94.600 1.500-5.500-.7-11.300-5.600-14.100zM256 336c-44.100 0-80-35.900-80-80s35.900-80 80-80 80 35.900 80 80-35.900 80-80 80z"/></g></svg></div>
<div class="td " style="left:1312px;top:650px;width:79px;height:29px;line-height:29px;"></div>
<div class="td " style="left:1392px;top:650px;width:59px;height:29px;line-height:29px;"><svg style="left:19px;top:4px" width="21" height="21" viewBox="0 0 21 21"><g fill="#3fa9f5"><rect x="7.800" y="0" width="6.200" height="6" rx="1.200"/><rect x="3.200" y="7.800" width="6.200" height="6" rx="1.200" transform="rotate(-25 6.300 10.800)"/><rect x="11.200" y="7.500" width="6.200" height="6" rx="1.200"/><rect x="0" y="15" width="6.200" height="6" rx="1.200"/><rect x="7.400" y="15" width="6.200" height="6" rx="1.200"/><rect x="14.800" y="15" width="6.200" height="6" rx="1.200"/></g></svg></div>
<div class="td " style="left:1452px;top:650px;width:79px;height:29px;line-height:29px;">판매중</div>
<div class="td y r n" style="left:1532px;top:650px;width:99px;height:29px;line-height:29px;">14,090</div>
<div class="td y r n" style="left:1632px;top:650px;width:79px;height:29px;line-height:29px;">11,742</div>
<div class="td y r n" style="left:1712px;top:650px;width:79px;height:29px;line-height:29px;">14,090</div>
<div class="cb" style="top:690px"></div>
<div class="td y n" style="left:67px;top:680px;width:99px;height:29px;line-height:29px;">8242659214</div>
<div class="td " style="left:167px;top:680px;width:109px;height:29px;line-height:29px;"><span class="ali"><b>Alibaba</b>.com</span></div>
<div class="td n" style="left:277px;top:680px;width:109px;height:29px;line-height:29px;">next-engine</div>
<div class="td " style="left:387px;top:680px;width:54px;height:29px;line-height:29px;"><svg style="left:17px;top:4px" width="20" height="20" viewBox="0 0 20 20"><rect x="3" y="2" width="14" height="16" fill="#eef0f6"/><circle cx="10" cy="10" r="5" fill="#5b5b8c"/><circle cx="5" cy="5" r="1.500" fill="#99a"/><circle cx="15" cy="5" r="1.500" fill="#99a"/><circle cx="5" cy="15" r="1.500" fill="#99a"/><circle cx="15" cy="15" r="1.500" fill="#99a"/><circle cx="10" cy="10" r="2" fill="#c9c9e0"/></svg></div>
<div class="td l" style="left:442px;top:680px;width:349px;height:29px;line-height:29px;"><span class="pn">승화 텀블러 머그잔 프레스 기계 올인원 프린트 스키니 텀블</span><span style="color:#1a9ef0;letter-spacing:0;font-size:11px">...</span></div>
<div class="td y n" style="left:792px;top:680px;width:149px;height:29px;line-height:29px;">1600431531313</div>
<div class="td y l" style="left:942px;top:680px;width:249px;height:29px;line-height:29px;">[드랍쉬핑-alibaba]-&gt;열 프레스 기계</div>
<div class="td " style="left:1192px;top:680px;width:59px;height:29px;line-height:29px;"><svg style="left:19px;top:5px" width="21" height="16" viewBox="0 0 21 16"><g fill="#3fa9f5"><rect x="7.700" y="0" width="5.600" height="5.200" rx="1.300"/><rect x="0" y="10.800" width="5.400" height="5.200" rx="1.300"/><rect x="7.800" y="10.800" width="5.400" height="5.200" rx="1.300"/><rect x="15.600" y="10.800" width="5.400" height="5.200" rx="1.300"/></g><path d="M10.500 5v6M2.700 11V8h15.600v3" fill="none" stroke="#3fa9f5" stroke-width="1.700"/></svg></div>
<div class="td " style="left:1252px;top:680px;width:59px;height:29px;line-height:29px;"><svg style="left:18px;top:5px" width="23" height="19" viewBox="0 0 23 19"><g fill="#a8a8a8"><path transform="translate(0,0) scale(.0235)" d="M487.400 315.700l-42.600-24.600c4.300-23.200 4.300-47 0-70.200l42.600-24.600c4.900-2.800 7.100-8.600 5.500-14-11.100-35.600-30-67.800-54.700-94.600-3.800-4.100-10-5.100-14.800-2.300L380.800 110c-17.900-15.400-38.500-27.300-60.800-35.100V25.800c0-5.600-3.900-10.500-9.400-11.700-36.700-8.200-74.300-7.800-109.200 0-5.500 1.200-9.400 6.100-9.400 11.700V75c-22.200 7.900-42.800 19.800-60.800 35.100L88.700 85.500c-4.900-2.800-11-1.900-14.800 2.300-24.700 26.700-43.600 58.900-54.700 94.600-1.700 5.400.6 11.200 5.500 14L67.300 221c-4.300 23.200-4.300 47 0 70.200l-42.600 24.600c-4.900 2.800-7.100 8.600-5.500 14 11.100 35.600 30 67.800 54.700 94.600 3.800 4.100 10 5.100 14.800 2.300l42.600-24.600c17.900 15.400 38.500 27.300 60.800 35.100v49.200c0 5.600 3.900 10.500 9.400 11.700 36.700 8.200 74.300 7.800 109.200 0 5.500-1.200 9.400-6.100 9.400-11.700v-49.200c22.200-7.900 42.800-19.800 60.800-35.100l42.600 24.600c4.900 2.800 11 1.900 14.800-2.300 24.700-26.700 43.600-58.900 54.700-94.600 1.500-5.500-.7-11.300-5.600-14.100zM256 336c-44.100 0-80-35.900-80-80s35.900-80 80-80 80 35.900 80 80-35.900 80-80 80z"/><path transform="translate(11.200,7.200) scale(.0235)" d="M487.400 315.700l-42.600-24.600c4.300-23.200 4.300-47 0-70.200l42.600-24.600c4.900-2.800 7.100-8.600 5.500-14-11.100-35.600-30-67.800-54.700-94.600-3.800-4.100-10-5.100-14.800-2.300L380.800 110c-17.900-15.400-38.500-27.300-60.800-35.100V25.800c0-5.600-3.900-10.500-9.400-11.700-36.700-8.200-74.300-7.800-109.200 0-5.500 1.200-9.400 6.100-9.400 11.700V75c-22.200 7.900-42.800 19.800-60.800 35.100L88.700 85.500c-4.900-2.800-11-1.900-14.800 2.300-24.700 26.700-43.600 58.900-54.700 94.600-1.700 5.400.6 11.200 5.500 14L67.300 221c-4.300 23.200-4.300 47 0 70.200l-42.600 24.600c-4.900 2.800-7.100 8.600-5.500 14 11.100 35.600 30 67.800 54.700 94.600 3.800 4.100 10 5.100 14.800 2.300l42.600-24.600c17.900 15.400 38.500 27.300 60.800 35.100v49.200c0 5.600 3.900 10.500 9.400 11.700 36.700 8.200 74.300 7.800 109.200 0 5.500-1.200 9.400-6.100 9.400-11.700v-49.200c22.200-7.900 42.800-19.800 60.800-35.100l42.600 24.600c4.900 2.800 11 1.900 14.800-2.300 24.700-26.700 43.600-58.900 54.700-94.600 1.500-5.500-.7-11.300-5.600-14.100zM256 336c-44.100 0-80-35.900-80-80s35.900-80 80-80 80 35.900 80 80-35.900 80-80 80z"/></g></svg></div>
<div class="td " style="left:1312px;top:680px;width:79px;height:29px;line-height:29px;"></div>
<div class="td " style="left:1392px;top:680px;width:59px;height:29px;line-height:29px;"><svg style="left:19px;top:4px" width="21" height="21" viewBox="0 0 21 21"><g fill="#3fa9f5"><rect x="7.800" y="0" width="6.200" height="6" rx="1.200"/><rect x="3.200" y="7.800" width="6.200" height="6" rx="1.200" transform="rotate(-25 6.300 10.800)"/><rect x="11.200" y="7.500" width="6.200" height="6" rx="1.200"/><rect x="0" y="15" width="6.200" height="6" rx="1.200"/><rect x="7.400" y="15" width="6.200" height="6" rx="1.200"/><rect x="14.800" y="15" width="6.200" height="6" rx="1.200"/></g></svg></div>
<div class="td " style="left:1452px;top:680px;width:79px;height:29px;line-height:29px;">판매중</div>
<div class="td y r n" style="left:1532px;top:680px;width:99px;height:29px;line-height:29px;">473,810</div>
<div class="td y r n" style="left:1632px;top:680px;width:79px;height:29px;line-height:29px;">394,838</div>
<div class="td y r n" style="left:1712px;top:680px;width:79px;height:29px;line-height:29px;">473,810</div>
<div class="cb" style="top:720px"></div>
<div class="td y n" style="left:67px;top:710px;width:99px;height:29px;line-height:29px;">7580405492</div>
<div class="td " style="left:167px;top:710px;width:109px;height:29px;line-height:29px;"><span class="ali"><b>Alibaba</b>.com</span></div>
<div class="td n" style="left:277px;top:710px;width:109px;height:29px;line-height:29px;">next-engine</div>
<div class="td " style="left:387px;top:710px;width:54px;height:29px;line-height:29px;"><svg style="left:17px;top:4px" width="20" height="20" viewBox="0 0 20 20"><rect x="2" y="9" width="8" height="10" fill="#2a2a2a"/><rect x="11" y="10" width="5" height="9" fill="#555"/><rect x="3" y="2" width="2" height="5" fill="#999"/><rect x="6" y="1" width="2" height="6" fill="#bbb"/><rect x="13" y="3" width="2" height="6" fill="#6a8"/><rect x="16" y="2" width="2" height="5" fill="#777"/></svg></div>
<div class="td l" style="left:442px;top:710px;width:349px;height:29px;line-height:29px;"><span class="pn">중국 브랜드 워터시 <i>87</i>온스 스테인리스 텀블러 이중 벽 <i>SS30</i></span><span style="color:#1a9ef0;letter-spacing:0;font-size:11px">...</span></div>
<div class="td y n" style="left:792px;top:710px;width:149px;height:29px;line-height:29px;">1601448527812</div>
<div class="td y l" style="left:942px;top:710px;width:249px;height:29px;line-height:29px;">[드랍쉬핑-alibaba]-&gt;스테인리스 텀블러</div>
<div class="td " style="left:1192px;top:710px;width:59px;height:29px;line-height:29px;"><svg style="left:19px;top:5px" width="21" height="16" viewBox="0 0 21 16"><g fill="#3fa9f5"><rect x="7.700" y="0" width="5.600" height="5.200" rx="1.300"/><rect x="0" y="10.800" width="5.400" height="5.200" rx="1.300"/><rect x="7.800" y="10.800" width="5.400" height="5.200" rx="1.300"/><rect x="15.600" y="10.800" width="5.400" height="5.200" rx="1.300"/></g><path d="M10.500 5v6M2.700 11V8h15.600v3" fill="none" stroke="#3fa9f5" stroke-width="1.700"/></svg></div>
<div class="td " style="left:1252px;top:710px;width:59px;height:29px;line-height:29px;"><svg style="left:18px;top:5px" width="23" height="19" viewBox="0 0 23 19"><g fill="#a8a8a8"><path transform="translate(0,0) scale(.0235)" d="M487.400 315.700l-42.600-24.600c4.300-23.200 4.300-47 0-70.200l42.600-24.600c4.900-2.800 7.100-8.600 5.500-14-11.100-35.600-30-67.800-54.700-94.600-3.800-4.100-10-5.100-14.800-2.300L380.800 110c-17.900-15.400-38.500-27.300-60.800-35.100V25.800c0-5.600-3.900-10.500-9.400-11.700-36.700-8.200-74.300-7.800-109.200 0-5.500 1.200-9.400 6.100-9.400 11.700V75c-22.200 7.900-42.800 19.800-60.800 35.100L88.700 85.500c-4.900-2.800-11-1.900-14.800 2.300-24.700 26.700-43.600 58.900-54.700 94.600-1.700 5.400.6 11.200 5.500 14L67.300 221c-4.300 23.200-4.300 47 0 70.200l-42.600 24.600c-4.900 2.800-7.100 8.600-5.500 14 11.100 35.600 30 67.800 54.700 94.600 3.800 4.100 10 5.100 14.800 2.300l42.600-24.600c17.900 15.400 38.500 27.300 60.800 35.100v49.200c0 5.600 3.900 10.500 9.400 11.700 36.700 8.200 74.300 7.800 109.200 0 5.500-1.200 9.400-6.100 9.400-11.700v-49.200c22.200-7.900 42.800-19.800 60.800-35.100l42.600 24.600c4.900 2.800 11 1.900 14.800-2.300 24.700-26.700 43.600-58.900 54.700-94.600 1.500-5.500-.7-11.300-5.600-14.100zM256 336c-44.100 0-80-35.900-80-80s35.900-80 80-80 80 35.900 80 80-35.900 80-80 80z"/><path transform="translate(11.200,7.200) scale(.0235)" d="M487.400 315.700l-42.600-24.600c4.300-23.200 4.300-47 0-70.200l42.600-24.600c4.900-2.800 7.100-8.600 5.500-14-11.100-35.600-30-67.800-54.700-94.600-3.800-4.100-10-5.100-14.800-2.300L380.800 110c-17.900-15.400-38.500-27.300-60.800-35.100V25.800c0-5.600-3.900-10.500-9.400-11.700-36.700-8.200-74.300-7.800-109.200 0-5.500 1.200-9.400 6.100-9.400 11.700V75c-22.200 7.900-42.800 19.800-60.800 35.100L88.700 85.500c-4.900-2.800-11-1.900-14.800 2.300-24.700 26.700-43.600 58.900-54.700 94.600-1.700 5.400.6 11.200 5.500 14L67.300 221c-4.300 23.200-4.300 47 0 70.200l-42.600 24.600c-4.900 2.800-7.100 8.600-5.500 14 11.100 35.600 30 67.800 54.700 94.600 3.800 4.100 10 5.100 14.800 2.300l42.600-24.600c17.900 15.400 38.500 27.300 60.800 35.100v49.200c0 5.600 3.900 10.500 9.400 11.700 36.700 8.200 74.300 7.800 109.200 0 5.500-1.200 9.400-6.100 9.400-11.700v-49.200c22.200-7.900 42.800-19.800 60.800-35.100l42.600 24.600c4.900 2.800 11 1.900 14.800-2.300 24.700-26.700 43.600-58.900 54.700-94.600 1.500-5.500-.7-11.300-5.600-14.100zM256 336c-44.100 0-80-35.900-80-80s35.900-80 80-80 80 35.900 80 80-35.900 80-80 80z"/></g></svg></div>
<div class="td " style="left:1312px;top:710px;width:79px;height:29px;line-height:29px;"></div>
<div class="td " style="left:1392px;top:710px;width:59px;height:29px;line-height:29px;"><svg style="left:19px;top:4px" width="21" height="21" viewBox="0 0 21 21"><g fill="#3fa9f5"><rect x="7.800" y="0" width="6.200" height="6" rx="1.200"/><rect x="3.200" y="7.800" width="6.200" height="6" rx="1.200" transform="rotate(-25 6.300 10.800)"/><rect x="11.200" y="7.500" width="6.200" height="6" rx="1.200"/><rect x="0" y="15" width="6.200" height="6" rx="1.200"/><rect x="7.400" y="15" width="6.200" height="6" rx="1.200"/><rect x="14.800" y="15" width="6.200" height="6" rx="1.200"/></g></svg></div>
<div class="td " style="left:1452px;top:710px;width:79px;height:29px;line-height:29px;">판매중</div>
<div class="td y r n" style="left:1532px;top:710px;width:99px;height:29px;line-height:29px;">8,030</div>
<div class="td y r n" style="left:1632px;top:710px;width:79px;height:29px;line-height:29px;">6,693</div>
<div class="td y r n" style="left:1712px;top:710px;width:79px;height:29px;line-height:29px;">8,030</div>
<div class="cb" style="top:750px"></div>
<div class="td y n" style="left:67px;top:740px;width:99px;height:29px;line-height:29px;">7182943624</div>
<div class="td " style="left:167px;top:740px;width:109px;height:29px;line-height:29px;"><span class="ali"><b>Alibaba</b>.com</span></div>
<div class="td n" style="left:277px;top:740px;width:109px;height:29px;line-height:29px;">next-engine</div>
<div class="td " style="left:387px;top:740px;width:54px;height:29px;line-height:29px;"><svg style="left:16px;top:4px" width="22" height="20" viewBox="0 0 22 20"><path d="M1 10l12-4 8 4-12 6z" fill="#2f3b45"/><path d="M1 10v4l8 5v-3z" fill="#2b8f8a"/><path d="M9 16v3l12-6v-3z" fill="#3fb3ab"/><path d="M4 11l9-3 4 2-9 3z" fill="#5fd0c4"/><rect x="6" y="1" width="2" height="5" fill="#5a8fd0"/><rect x="10" y="0" width="2" height="5" fill="#888"/><rect x="14" y="1" width="2" height="5" fill="#c55"/></svg></div>
<div class="td l" style="left:442px;top:740px;width:349px;height:29px;line-height:29px;"><span class="pn"><i>11</i>온스 <i>20</i>온스 <i>30</i>온스 텀블러 머그 열 프레스 기계 승화 프린</span><span style="color:#1a9ef0;letter-spacing:0;font-size:11px">...</span></div>
<div class="td y n" style="left:792px;top:740px;width:149px;height:29px;line-height:29px;">1601469360205</div>
<div class="td y l" style="left:942px;top:740px;width:249px;height:29px;line-height:29px;">[드랍쉬핑-alibaba]-&gt;열 프레스 기계</div>
<div class="td " style="left:1192px;top:740px;width:59px;height:29px;line-height:29px;"><svg style="left:19px;top:5px" width="21" height="16" viewBox="0 0 21 16"><g fill="#3fa9f5"><rect x="7.700" y="0" width="5.600" height="5.200" rx="1.300"/><rect x="0" y="10.800" width="5.400" height="5.200" rx="1.300"/><rect x="7.800" y="10.800" width="5.400" height="5.200" rx="1.300"/><rect x="15.600" y="10.800" width="5.400" height="5.200" rx="1.300"/></g><path d="M10.500 5v6M2.700 11V8h15.600v3" fill="none" stroke="#3fa9f5" stroke-width="1.700"/></svg></div>
<div class="td " style="left:1252px;top:740px;width:59px;height:29px;line-height:29px;"><svg style="left:18px;top:5px" width="23" height="19" viewBox="0 0 23 19"><g fill="#a8a8a8"><path transform="translate(0,0) scale(.0235)" d="M487.400 315.700l-42.600-24.600c4.300-23.200 4.300-47 0-70.200l42.600-24.600c4.900-2.800 7.100-8.600 5.500-14-11.100-35.600-30-67.800-54.700-94.600-3.800-4.100-10-5.100-14.800-2.300L380.800 110c-17.900-15.400-38.500-27.300-60.800-35.100V25.800c0-5.600-3.900-10.500-9.400-11.700-36.700-8.200-74.300-7.800-109.200 0-5.500 1.200-9.400 6.100-9.400 11.700V75c-22.200 7.900-42.800 19.800-60.800 35.100L88.700 85.500c-4.900-2.800-11-1.900-14.800 2.300-24.700 26.700-43.600 58.900-54.700 94.600-1.700 5.400.6 11.200 5.500 14L67.300 221c-4.300 23.200-4.300 47 0 70.200l-42.600 24.600c-4.900 2.800-7.100 8.600-5.500 14 11.100 35.600 30 67.800 54.700 94.600 3.800 4.100 10 5.100 14.800 2.300l42.600-24.600c17.900 15.400 38.500 27.300 60.800 35.100v49.200c0 5.600 3.900 10.500 9.400 11.700 36.700 8.200 74.300 7.800 109.200 0 5.500-1.200 9.400-6.100 9.400-11.700v-49.200c22.200-7.900 42.800-19.800 60.800-35.100l42.600 24.600c4.900 2.800 11 1.900 14.800-2.300 24.700-26.700 43.600-58.900 54.700-94.600 1.500-5.500-.7-11.300-5.600-14.100zM256 336c-44.100 0-80-35.900-80-80s35.900-80 80-80 80 35.900 80 80-35.900 80-80 80z"/><path transform="translate(11.200,7.200) scale(.0235)" d="M487.400 315.700l-42.600-24.600c4.300-23.200 4.300-47 0-70.200l42.600-24.600c4.900-2.800 7.100-8.600 5.500-14-11.100-35.600-30-67.800-54.700-94.600-3.800-4.100-10-5.100-14.800-2.300L380.800 110c-17.900-15.400-38.500-27.300-60.800-35.100V25.800c0-5.600-3.900-10.500-9.400-11.700-36.700-8.200-74.300-7.800-109.200 0-5.500 1.200-9.400 6.100-9.400 11.700V75c-22.200 7.900-42.800 19.800-60.800 35.100L88.700 85.500c-4.900-2.800-11-1.900-14.800 2.300-24.700 26.700-43.600 58.900-54.700 94.600-1.700 5.400.6 11.200 5.500 14L67.300 221c-4.300 23.200-4.300 47 0 70.200l-42.600 24.600c-4.900 2.800-7.100 8.600-5.500 14 11.100 35.600 30 67.800 54.700 94.600 3.800 4.100 10 5.100 14.800 2.300l42.600-24.600c17.900 15.400 38.500 27.300 60.800 35.100v49.200c0 5.600 3.900 10.500 9.400 11.700 36.700 8.200 74.300 7.800 109.200 0 5.500-1.200 9.400-6.100 9.400-11.700v-49.200c22.200-7.900 42.800-19.800 60.800-35.100l42.600 24.600c4.900 2.800 11 1.900 14.800-2.300 24.700-26.700 43.600-58.900 54.700-94.600 1.500-5.500-.7-11.300-5.600-14.100zM256 336c-44.100 0-80-35.900-80-80s35.900-80 80-80 80 35.900 80 80-35.900 80-80 80z"/></g></svg></div>
<div class="td " style="left:1312px;top:740px;width:79px;height:29px;line-height:29px;"></div>
<div class="td " style="left:1392px;top:740px;width:59px;height:29px;line-height:29px;"><svg style="left:19px;top:4px" width="21" height="21" viewBox="0 0 21 21"><g fill="#3fa9f5"><rect x="7.800" y="0" width="6.200" height="6" rx="1.200"/><rect x="3.200" y="7.800" width="6.200" height="6" rx="1.200" transform="rotate(-25 6.300 10.800)"/><rect x="11.200" y="7.500" width="6.200" height="6" rx="1.200"/><rect x="0" y="15" width="6.200" height="6" rx="1.200"/><rect x="7.400" y="15" width="6.200" height="6" rx="1.200"/><rect x="14.800" y="15" width="6.200" height="6" rx="1.200"/></g></svg></div>
<div class="td " style="left:1452px;top:740px;width:79px;height:29px;line-height:29px;">판매중</div>
<div class="td y r n" style="left:1532px;top:740px;width:99px;height:29px;line-height:29px;">105,580</div>
<div class="td y r n" style="left:1632px;top:740px;width:79px;height:29px;line-height:29px;">87,979</div>
<div class="td y r n" style="left:1712px;top:740px;width:79px;height:29px;line-height:29px;">105,580</div>
<div class="cb" style="top:780px"></div>
<div class="td y n" style="left:67px;top:770px;width:99px;height:29px;line-height:29px;">8442670076</div>
<div class="td " style="left:167px;top:770px;width:109px;height:29px;line-height:29px;"><span class="ali"><b>Alibaba</b>.com</span></div>
<div class="td n" style="left:277px;top:770px;width:109px;height:29px;line-height:29px;">next-engine</div>
<div class="td " style="left:387px;top:770px;width:54px;height:29px;line-height:29px;"><svg style="left:17px;top:4px" width="20" height="20" viewBox="0 0 20 20"><rect width="20" height="20" fill="#17171a"/><rect x="8" y="6" width="4" height="8" fill="#6d6448"/><rect x="9" y="4" width="2" height="2" fill="#99916e"/></svg></div>
<div class="td l" style="left:442px;top:770px;width:349px;height:29px;line-height:29px;"><span class="pn">주스잔 <i>9</i>온스 드링킹 유리 제품 세트 현대 텀블러 음료 아이</span><span style="color:#1a9ef0;letter-spacing:0;font-size:11px">...</span></div>
<div class="td y n" style="left:792px;top:770px;width:149px;height:29px;line-height:29px;">1600494167338</div>
<div class="td y l" style="left:942px;top:770px;width:249px;height:29px;line-height:29px;">[드랍쉬핑-alibaba]-&gt;유리 드링크웨어</div>
<div class="td " style="left:1192px;top:770px;width:59px;height:29px;line-height:29px;"><svg style="left:19px;top:5px" width="21" height="16" viewBox="0 0 21 16"><g fill="#3fa9f5"><rect x="7.700" y="0" width="5.600" height="5.200" rx="1.300"/><rect x="0" y="10.800" width="5.400" height="5.200" rx="1.300"/><rect x="7.800" y="10.800" width="5.400" height="5.200" rx="1.300"/><rect x="15.600" y="10.800" width="5.400" height="5.200" rx="1.300"/></g><path d="M10.500 5v6M2.700 11V8h15.600v3" fill="none" stroke="#3fa9f5" stroke-width="1.700"/></svg></div>
<div class="td " style="left:1252px;top:770px;width:59px;height:29px;line-height:29px;"><svg style="left:18px;top:5px" width="23" height="19" viewBox="0 0 23 19"><g fill="#a8a8a8"><path transform="translate(0,0) scale(.0235)" d="M487.400 315.700l-42.600-24.600c4.300-23.200 4.300-47 0-70.200l42.600-24.600c4.900-2.800 7.100-8.600 5.500-14-11.100-35.600-30-67.800-54.700-94.600-3.800-4.100-10-5.100-14.800-2.300L380.800 110c-17.900-15.400-38.500-27.300-60.800-35.100V25.800c0-5.600-3.900-10.500-9.400-11.700-36.700-8.200-74.300-7.800-109.200 0-5.500 1.200-9.400 6.100-9.400 11.700V75c-22.200 7.900-42.800 19.800-60.800 35.100L88.700 85.500c-4.900-2.800-11-1.900-14.800 2.300-24.700 26.700-43.600 58.900-54.700 94.600-1.700 5.400.6 11.200 5.500 14L67.300 221c-4.300 23.200-4.300 47 0 70.200l-42.600 24.600c-4.900 2.800-7.100 8.600-5.500 14 11.100 35.600 30 67.800 54.700 94.600 3.800 4.100 10 5.100 14.800 2.300l42.600-24.600c17.900 15.400 38.500 27.300 60.800 35.100v49.200c0 5.600 3.900 10.500 9.400 11.700 36.700 8.200 74.300 7.800 109.200 0 5.500-1.200 9.400-6.100 9.400-11.700v-49.200c22.200-7.900 42.800-19.800 60.800-35.100l42.600 24.600c4.900 2.800 11 1.900 14.800-2.300 24.700-26.700 43.600-58.900 54.700-94.600 1.500-5.500-.7-11.300-5.600-14.100zM256 336c-44.100 0-80-35.900-80-80s35.900-80 80-80 80 35.900 80 80-35.900 80-80 80z"/><path transform="translate(11.200,7.200) scale(.0235)" d="M487.400 315.700l-42.600-24.600c4.300-23.200 4.300-47 0-70.200l42.600-24.600c4.900-2.800 7.100-8.600 5.500-14-11.100-35.600-30-67.800-54.700-94.600-3.800-4.100-10-5.100-14.800-2.300L380.800 110c-17.900-15.400-38.500-27.300-60.800-35.100V25.800c0-5.600-3.900-10.500-9.400-11.700-36.700-8.200-74.300-7.800-109.200 0-5.500 1.200-9.400 6.100-9.400 11.700V75c-22.200 7.900-42.800 19.800-60.800 35.100L88.700 85.500c-4.900-2.800-11-1.900-14.800 2.300-24.700 26.700-43.600 58.900-54.700 94.600-1.700 5.400.6 11.200 5.500 14L67.300 221c-4.300 23.200-4.300 47 0 70.200l-42.600 24.600c-4.900 2.800-7.100 8.600-5.500 14 11.100 35.600 30 67.800 54.700 94.600 3.800 4.100 10 5.100 14.800 2.300l42.600-24.600c17.900 15.400 38.500 27.300 60.800 35.100v49.200c0 5.600 3.900 10.500 9.400 11.700 36.700 8.200 74.300 7.800 109.200 0 5.500-1.200 9.400-6.100 9.400-11.700v-49.200c22.200-7.900 42.800-19.800 60.800-35.100l42.600 24.600c4.900 2.800 11 1.900 14.800-2.300 24.700-26.700 43.600-58.900 54.700-94.600 1.500-5.500-.7-11.300-5.600-14.100zM256 336c-44.100 0-80-35.900-80-80s35.900-80 80-80 80 35.900 80 80-35.900 80-80 80z"/></g></svg></div>
<div class="td " style="left:1312px;top:770px;width:79px;height:29px;line-height:29px;"></div>
<div class="td " style="left:1392px;top:770px;width:59px;height:29px;line-height:29px;"><svg style="left:19px;top:4px" width="21" height="21" viewBox="0 0 21 21"><g fill="#3fa9f5"><rect x="7.800" y="0" width="6.200" height="6" rx="1.200"/><rect x="3.200" y="7.800" width="6.200" height="6" rx="1.200" transform="rotate(-25 6.300 10.800)"/><rect x="11.200" y="7.500" width="6.200" height="6" rx="1.200"/><rect x="0" y="15" width="6.200" height="6" rx="1.200"/><rect x="7.400" y="15" width="6.200" height="6" rx="1.200"/><rect x="14.800" y="15" width="6.200" height="6" rx="1.200"/></g></svg></div>
<div class="td " style="left:1452px;top:770px;width:79px;height:29px;line-height:29px;">판매중</div>
<div class="td y r n" style="left:1532px;top:770px;width:99px;height:29px;line-height:29px;">4,400</div>
<div class="td y r n" style="left:1632px;top:770px;width:79px;height:29px;line-height:29px;">3,669</div>
<div class="td y r n" style="left:1712px;top:770px;width:79px;height:29px;line-height:29px;">4,400</div>
<div class="cb" style="top:810px"></div>
<div class="td y n" style="left:67px;top:800px;width:99px;height:29px;line-height:29px;">2886758983</div>
<div class="td " style="left:167px;top:800px;width:109px;height:29px;line-height:29px;"><span class="ali"><b>Alibaba</b>.com</span></div>
<div class="td n" style="left:277px;top:800px;width:109px;height:29px;line-height:29px;">next-engine</div>
<div class="td " style="left:387px;top:800px;width:54px;height:29px;line-height:29px;"><svg style="left:16px;top:4px" width="22" height="20" viewBox="0 0 22 20"><rect x="4" y="1" width="14" height="9" rx="1" fill="#c5d7e6"/><rect x="6" y="3" width="10" height="3" fill="#7fa6c4"/><rect x="3" y="10" width="16" height="3" fill="#9fb3c2"/><rect x="2" y="15" width="18" height="3" fill="#f0e9dc"/><rect x="4" y="16" width="14" height="1" fill="#d9c9a8"/></svg></div>
<div class="td l" style="left:442px;top:800px;width:349px;height:29px;line-height:29px;"><span class="pn">머그컵 및 텀블러 열 프레스용 밀란테크 새로운 공압 자동 열</span><span style="color:#1a9ef0;letter-spacing:0;font-size:11px">...</span></div>
<div class="td y n" style="left:792px;top:800px;width:149px;height:29px;line-height:29px;">1601634917854</div>
<div class="td y l" style="left:942px;top:800px;width:249px;height:29px;line-height:29px;">[드랍쉬핑-alibaba]-&gt;열 프레스 기계</div>
<div class="td " style="left:1192px;top:800px;width:59px;height:29px;line-height:29px;"><svg style="left:19px;top:5px" width="21" height="16" viewBox="0 0 21 16"><g fill="#3fa9f5"><rect x="7.700" y="0" width="5.600" height="5.200" rx="1.300"/><rect x="0" y="10.800" width="5.400" height="5.200" rx="1.300"/><rect x="7.800" y="10.800" width="5.400" height="5.200" rx="1.300"/><rect x="15.600" y="10.800" width="5.400" height="5.200" rx="1.300"/></g><path d="M10.500 5v6M2.700 11V8h15.600v3" fill="none" stroke="#3fa9f5" stroke-width="1.700"/></svg></div>
<div class="td " style="left:1252px;top:800px;width:59px;height:29px;line-height:29px;"><svg style="left:18px;top:5px" width="23" height="19" viewBox="0 0 23 19"><g fill="#a8a8a8"><path transform="translate(0,0) scale(.0235)" d="M487.400 315.700l-42.600-24.600c4.300-23.200 4.300-47 0-70.200l42.600-24.600c4.900-2.800 7.100-8.600 5.500-14-11.100-35.600-30-67.800-54.700-94.600-3.800-4.100-10-5.100-14.800-2.300L380.800 110c-17.900-15.400-38.500-27.300-60.800-35.100V25.800c0-5.600-3.900-10.500-9.400-11.700-36.700-8.200-74.300-7.800-109.200 0-5.500 1.200-9.400 6.100-9.400 11.700V75c-22.200 7.900-42.800 19.800-60.800 35.100L88.700 85.500c-4.900-2.800-11-1.900-14.800 2.300-24.700 26.700-43.600 58.900-54.700 94.600-1.700 5.400.6 11.200 5.500 14L67.300 221c-4.300 23.200-4.300 47 0 70.200l-42.600 24.600c-4.900 2.800-7.100 8.600-5.500 14 11.100 35.600 30 67.800 54.700 94.600 3.800 4.100 10 5.100 14.800 2.300l42.600-24.600c17.900 15.400 38.500 27.300 60.800 35.100v49.200c0 5.600 3.900 10.500 9.400 11.700 36.700 8.200 74.300 7.800 109.200 0 5.500-1.200 9.400-6.100 9.400-11.700v-49.200c22.200-7.900 42.800-19.800 60.800-35.100l42.600 24.600c4.900 2.800 11 1.900 14.800-2.300 24.700-26.700 43.600-58.900 54.700-94.600 1.500-5.500-.7-11.300-5.600-14.100zM256 336c-44.100 0-80-35.900-80-80s35.900-80 80-80 80 35.900 80 80-35.900 80-80 80z"/><path transform="translate(11.200,7.200) scale(.0235)" d="M487.400 315.700l-42.600-24.600c4.300-23.200 4.300-47 0-70.200l42.600-24.600c4.900-2.800 7.100-8.600 5.500-14-11.100-35.600-30-67.800-54.700-94.600-3.800-4.100-10-5.100-14.800-2.300L380.800 110c-17.900-15.400-38.500-27.300-60.800-35.100V25.800c0-5.600-3.900-10.500-9.400-11.700-36.700-8.200-74.300-7.800-109.200 0-5.500 1.200-9.400 6.100-9.400 11.700V75c-22.200 7.900-42.800 19.800-60.800 35.100L88.700 85.500c-4.900-2.800-11-1.900-14.800 2.300-24.700 26.700-43.600 58.900-54.700 94.600-1.700 5.400.6 11.200 5.500 14L67.300 221c-4.300 23.200-4.300 47 0 70.200l-42.600 24.600c-4.900 2.800-7.100 8.600-5.500 14 11.100 35.600 30 67.800 54.700 94.600 3.800 4.100 10 5.100 14.800 2.300l42.600-24.600c17.900 15.400 38.500 27.300 60.800 35.100v49.200c0 5.600 3.900 10.500 9.400 11.700 36.700 8.200 74.300 7.800 109.200 0 5.500-1.200 9.400-6.100 9.400-11.700v-49.200c22.200-7.900 42.800-19.800 60.800-35.100l42.600 24.600c4.900 2.800 11 1.900 14.800-2.300 24.700-26.700 43.600-58.900 54.700-94.600 1.500-5.500-.7-11.300-5.600-14.100zM256 336c-44.100 0-80-35.900-80-80s35.900-80 80-80 80 35.900 80 80-35.900 80-80 80z"/></g></svg></div>
<div class="td " style="left:1312px;top:800px;width:79px;height:29px;line-height:29px;"></div>
<div class="td " style="left:1392px;top:800px;width:59px;height:29px;line-height:29px;"><svg style="left:19px;top:4px" width="21" height="21" viewBox="0 0 21 21"><g fill="#3fa9f5"><rect x="7.800" y="0" width="6.200" height="6" rx="1.200"/><rect x="3.200" y="7.800" width="6.200" height="6" rx="1.200" transform="rotate(-25 6.300 10.800)"/><rect x="11.200" y="7.500" width="6.200" height="6" rx="1.200"/><rect x="0" y="15" width="6.200" height="6" rx="1.200"/><rect x="7.400" y="15" width="6.200" height="6" rx="1.200"/><rect x="14.800" y="15" width="6.200" height="6" rx="1.200"/></g></svg></div>
<div class="td " style="left:1452px;top:800px;width:79px;height:29px;line-height:29px;">판매중</div>
<div class="td y r n" style="left:1532px;top:800px;width:99px;height:29px;line-height:29px;">139,310</div>
<div class="td y r n" style="left:1632px;top:800px;width:79px;height:29px;line-height:29px;">116,088</div>
<div class="td y r n" style="left:1712px;top:800px;width:79px;height:29px;line-height:29px;">139,310</div>
<div class="cb" style="top:840px"></div>
<div class="td y n" style="left:67px;top:830px;width:99px;height:29px;line-height:29px;">7309234776</div>
<div class="td " style="left:167px;top:830px;width:109px;height:29px;line-height:29px;"><span class="ali"><b>Alibaba</b>.com</span></div>
<div class="td n" style="left:277px;top:830px;width:109px;height:29px;line-height:29px;">next-engine</div>
<div class="td " style="left:387px;top:830px;width:54px;height:29px;line-height:29px;"><svg style="left:17px;top:4px" width="20" height="20" viewBox="0 0 20 20"><rect x="5" y="1" width="10" height="17" rx="1" fill="#d9d9d9"/><rect x="6.500" y="3" width="7" height="6" fill="#8a8a8a"/><rect x="6.500" y="11" width="7" height="5" fill="#e9d8c0"/><rect x="5" y="17" width="10" height="2" fill="#aaa"/></svg></div>
<div class="td l" style="left:442px;top:830px;width:349px;height:29px;line-height:29px;"><span class="pn">오플렉스 텀블러 승화 오븐 제조 기계 <i>3D</i> 승화 진공 기계 휴</span><span style="color:#1a9ef0;letter-spacing:0;font-size:11px">...</span></div>
<div class="td y n" style="left:792px;top:830px;width:149px;height:29px;line-height:29px;">1601032591780</div>
<div class="td y l" style="left:942px;top:830px;width:249px;height:29px;line-height:29px;">[드랍쉬핑-alibaba]-&gt;열 프레스 기계</div>
<div class="td " style="left:1192px;top:830px;width:59px;height:29px;line-height:29px;"><svg style="left:19px;top:5px" width="21" height="16" viewBox="0 0 21 16"><g fill="#3fa9f5"><rect x="7.700" y="0" width="5.600" height="5.200" rx="1.300"/><rect x="0" y="10.800" width="5.400" height="5.200" rx="1.300"/><rect x="7.800" y="10.800" width="5.400" height="5.200" rx="1.300"/><rect x="15.600" y="10.800" width="5.400" height="5.200" rx="1.300"/></g><path d="M10.500 5v6M2.700 11V8h15.600v3" fill="none" stroke="#3fa9f5" stroke-width="1.700"/></svg></div>
<div class="td " style="left:1252px;top:830px;width:59px;height:29px;line-height:29px;"><svg style="left:18px;top:5px" width="23" height="19" viewBox="0 0 23 19"><g fill="#a8a8a8"><path transform="translate(0,0) scale(.0235)" d="M487.400 315.700l-42.600-24.600c4.300-23.200 4.300-47 0-70.200l42.600-24.600c4.900-2.800 7.100-8.600 5.500-14-11.100-35.600-30-67.800-54.700-94.600-3.800-4.100-10-5.100-14.800-2.300L380.800 110c-17.900-15.400-38.500-27.300-60.800-35.100V25.800c0-5.600-3.900-10.500-9.400-11.700-36.700-8.200-74.300-7.800-109.200 0-5.500 1.200-9.400 6.100-9.400 11.700V75c-22.200 7.900-42.800 19.800-60.800 35.100L88.700 85.500c-4.900-2.800-11-1.900-14.800 2.300-24.700 26.700-43.600 58.900-54.700 94.600-1.700 5.400.6 11.200 5.500 14L67.300 221c-4.300 23.200-4.300 47 0 70.200l-42.600 24.600c-4.900 2.800-7.100 8.600-5.500 14 11.100 35.600 30 67.800 54.700 94.600 3.800 4.100 10 5.100 14.800 2.300l42.600-24.600c17.900 15.400 38.500 27.300 60.800 35.100v49.200c0 5.600 3.900 10.500 9.400 11.700 36.700 8.200 74.300 7.800 109.200 0 5.500-1.200 9.400-6.100 9.400-11.700v-49.200c22.200-7.900 42.800-19.800 60.800-35.100l42.600 24.600c4.900 2.800 11 1.900 14.800-2.300 24.700-26.700 43.600-58.900 54.700-94.600 1.500-5.500-.7-11.300-5.600-14.100zM256 336c-44.100 0-80-35.900-80-80s35.900-80 80-80 80 35.900 80 80-35.900 80-80 80z"/><path transform="translate(11.200,7.200) scale(.0235)" d="M487.400 315.700l-42.600-24.600c4.300-23.200 4.300-47 0-70.200l42.600-24.600c4.900-2.800 7.100-8.600 5.500-14-11.100-35.600-30-67.800-54.700-94.600-3.800-4.100-10-5.100-14.800-2.300L380.800 110c-17.900-15.400-38.500-27.300-60.800-35.100V25.800c0-5.600-3.900-10.500-9.400-11.700-36.700-8.200-74.300-7.800-109.200 0-5.500 1.200-9.400 6.100-9.400 11.700V75c-22.200 7.900-42.800 19.800-60.800 35.100L88.700 85.500c-4.900-2.800-11-1.900-14.800 2.300-24.700 26.700-43.600 58.900-54.700 94.600-1.700 5.400.6 11.200 5.500 14L67.300 221c-4.300 23.200-4.300 47 0 70.200l-42.600 24.600c-4.900 2.800-7.100 8.600-5.500 14 11.100 35.600 30 67.800 54.700 94.600 3.800 4.100 10 5.100 14.800 2.300l42.600-24.600c17.900 15.400 38.500 27.300 60.800 35.100v49.200c0 5.600 3.900 10.500 9.400 11.700 36.700 8.200 74.300 7.800 109.200 0 5.500-1.200 9.400-6.100 9.400-11.700v-49.200c22.200-7.900 42.800-19.800 60.800-35.100l42.600 24.600c4.900 2.800 11 1.900 14.800-2.300 24.700-26.700 43.600-58.900 54.700-94.600 1.500-5.500-.7-11.300-5.600-14.100zM256 336c-44.100 0-80-35.900-80-80s35.900-80 80-80 80 35.900 80 80-35.900 80-80 80z"/></g></svg></div>
<div class="td " style="left:1312px;top:830px;width:79px;height:29px;line-height:29px;"></div>
<div class="td " style="left:1392px;top:830px;width:59px;height:29px;line-height:29px;"><svg style="left:19px;top:4px" width="21" height="21" viewBox="0 0 21 21"><g fill="#3fa9f5"><rect x="7.800" y="0" width="6.200" height="6" rx="1.200"/><rect x="3.200" y="7.800" width="6.200" height="6" rx="1.200" transform="rotate(-25 6.300 10.800)"/><rect x="11.200" y="7.500" width="6.200" height="6" rx="1.200"/><rect x="0" y="15" width="6.200" height="6" rx="1.200"/><rect x="7.400" y="15" width="6.200" height="6" rx="1.200"/><rect x="14.800" y="15" width="6.200" height="6" rx="1.200"/></g></svg></div>
<div class="td " style="left:1452px;top:830px;width:79px;height:29px;line-height:29px;">판매중</div>
<div class="td y r n" style="left:1532px;top:830px;width:99px;height:29px;line-height:29px;">387,500</div>
<div class="td y r n" style="left:1632px;top:830px;width:79px;height:29px;line-height:29px;">322,916</div>
<div class="td y r n" style="left:1712px;top:830px;width:79px;height:29px;line-height:29px;">387,500</div>
<div class="td y" style="left:67px;top:860px;width:99px;height:4px"></div>
<div class="td y" style="left:792px;top:860px;width:149px;height:4px"></div>
<div class="td y" style="left:942px;top:860px;width:249px;height:4px"></div>
<div class="td y" style="left:1532px;top:860px;width:99px;height:4px"></div>
<div class="td y" style="left:1632px;top:860px;width:79px;height:4px"></div>
<div class="td y" style="left:1712px;top:860px;width:79px;height:4px"></div>
<div class="vl" style="left:16px"></div>
<div class="vl" style="left:66px"></div>
<div class="vl" style="left:166px"></div>
<div class="vl" style="left:276px"></div>
<div class="vl" style="left:386px"></div>
<div class="vl" style="left:441px"></div>
<div class="vl" style="left:791px"></div>
<div class="vl" style="left:941px"></div>
<div class="vl" style="left:1191px"></div>
<div class="vl" style="left:1251px"></div>
<div class="vl" style="left:1311px"></div>
<div class="vl" style="left:1391px"></div>
<div class="vl" style="left:1451px"></div>
<div class="vl" style="left:1531px"></div>
<div class="vl" style="left:1631px"></div>
<div class="vl" style="left:1711px"></div>
<div class="hl" style="top:551px"></div>
<div class="hl" style="top:588px"></div>
<div class="hl" style="top:619px"></div>
<div class="hl" style="top:649px"></div>
<div class="hl" style="top:679px"></div>
<div class="hl" style="top:709px"></div>
<div class="hl" style="top:739px"></div>
<div class="hl" style="top:769px"></div>
<div class="hl" style="top:799px"></div>
<div class="hl" style="top:829px"></div>
<div class="hl" style="top:859px"></div>
<div class="abs" style="left:0;top:864px;width:1904px;height:20px;background:#fff"></div>
<div class="abs" style="left:16px;top:879px;width:1885px;height:1px;background:#e1e1ea"></div><div class="abs" style="left:16px;top:879px;width:1px;height:5px;background:#e1e1ea"></div><div class="abs" style="left:1900px;top:879px;width:1px;height:5px;background:#e1e1ea"></div>
<div class="abs" style="left:20px;top:867px;width:0;height:0;border:4.500px solid transparent;border-right:8px solid #7a7a7a;border-left:none"></div>
<div class="abs" style="left:34px;top:867px;width:761px;height:9px;border-radius:4.500px;background:#8a8a8a"></div>
<div class="abs" style="left:1791px;top:589px;width:15px;height:275px;background:#fafafa"></div>
<div class="abs" style="left:1794px;top:594px;width:0;height:0;border:4.500px solid transparent;border-bottom:7px solid #888;border-top:none"></div>
<div class="abs" style="left:1794px;top:607px;width:9px;height:17px;border-radius:4.500px;background:#888"></div>
<div class="abs" style="left:165.500px;top:587px;width:112px;height:274px;border:3px solid #e8172b;border-radius:2px"></div>
<div class="abs" style="left:141px;top:562px;width:28px;height:28px;border-radius:50%;background:#d4603f;color:#fff;font-size:29px;line-height:27px;font-weight:bold;text-align:center"><span style="display:inline-block;transform:scaleX(.78)">!</span></div>
<div class="abs" style="left:1747px;top:833px;width:134px;height:46px;border-radius:23px;background:#0a98fb;box-shadow:0 1px 4px rgba(0,0,0,.15)"><div class="abs" style="left:22px;top:13px;width:20px;height:20px;border:2px solid #10304e;border-radius:50%;color:#10304e;font-size:14px;line-height:16px;font-weight:bold;text-align:center">?</div><div class="abs" style="left:50px;top:12px;font-size:16px;line-height:24px;color:#10304e;font-weight:500;white-space:nowrap;letter-spacing:.5px">고객센터</div></div>
</body>
</html>
